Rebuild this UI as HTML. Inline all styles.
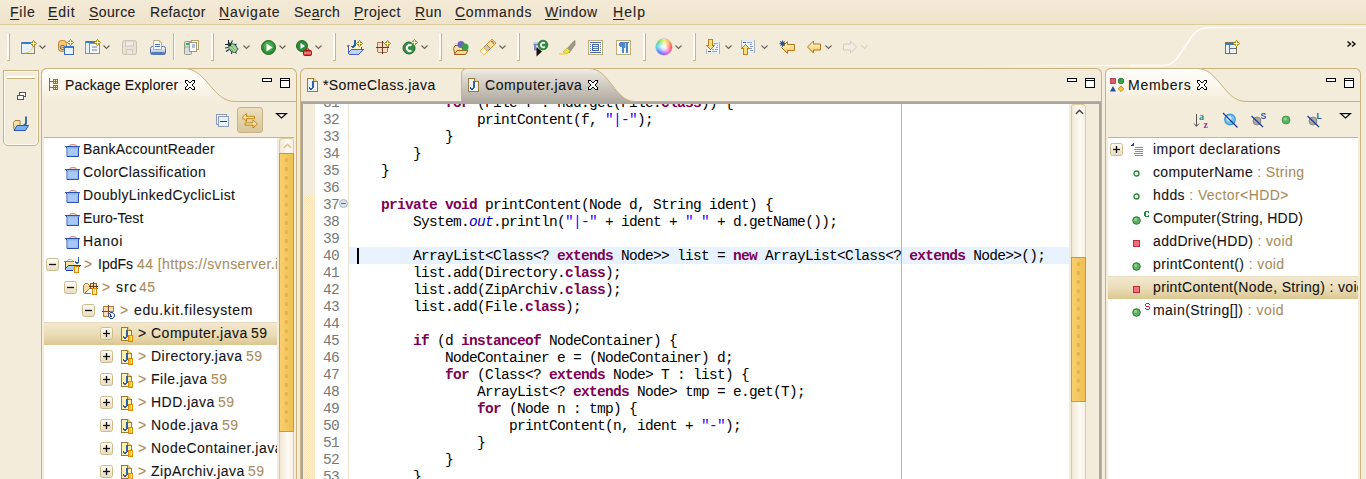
<!DOCTYPE html><html><head><meta charset="utf-8"><style>
*{margin:0;padding:0;box-sizing:border-box}
html,body{width:1366px;height:479px;overflow:hidden;background:#f4ecda}
body{position:relative;font-family:"Liberation Sans",sans-serif;font-size:14px;color:#1a1a1a}
.ab{position:absolute}
.t{position:absolute;white-space:pre;line-height:23px;height:23px;color:#141414;letter-spacing:0.4px;-webkit-text-stroke:0.1px currentColor}
.m{position:absolute;white-space:pre;top:2px;line-height:20px;font-size:14px;color:#242424;letter-spacing:0.5px;-webkit-text-stroke:0.1px currentColor}
.m u{text-decoration:underline;text-underline-offset:2px;text-decoration-thickness:1px}
.code{position:absolute;white-space:pre;font-family:"Liberation Mono",monospace;font-size:14.5px;letter-spacing:-0.7px;line-height:17px;height:17px;color:#000}
.k{color:#7f0055;font-weight:bold}
.s{color:#2a00ff}
.f{color:#0000c0;font-style:italic}
.ln{position:absolute;font-family:"Liberation Mono",monospace;font-size:14.5px;letter-spacing:-0.7px;line-height:17px;color:#787878;text-align:right;width:40px;left:299px}
.dim{color:#a88d5c}
svg{position:absolute;overflow:visible}
</style></head><body>

<div class="ab" style="left:0;top:0;width:1366px;height:24px;background:linear-gradient(#f3ead7,#efe3ca)"></div>
<div class="ab" style="left:0;top:24px;width:1366px;height:1px;background:#dccb9a"></div>
<div class="m" style="left:10px;letter-spacing:0.77px"><u>F</u>ile</div>
<div class="m" style="left:48px;letter-spacing:0.87px"><u>E</u>dit</div>
<div class="m" style="left:89px;letter-spacing:0.4px"><u>S</u>ource</div>
<div class="m" style="left:150px;letter-spacing:0.34px">Refac<u>t</u>or</div>
<div class="m" style="left:219px;letter-spacing:0.77px"><u>N</u>avigate</div>
<div class="m" style="left:294px;letter-spacing:0.28px">Se<u>a</u>rch</div>
<div class="m" style="left:354px;letter-spacing:0.45px"><u>P</u>roject</div>
<div class="m" style="left:415px;letter-spacing:0.4px"><u>R</u>un</div>
<div class="m" style="left:455px;letter-spacing:0.7px"><u>C</u>ommands</div>
<div class="m" style="left:545px;letter-spacing:0.48px"><u>W</u>indow</div>
<div class="m" style="left:613px;letter-spacing:1.1px"><u>H</u>elp</div>
<div class="ab" style="left:7px;top:33px;width:2px;height:27px;background:#fffdf6"></div>
<div class="ab" style="left:9px;top:33px;width:1px;height:28px;background:#cdb77e"></div>
<div class="ab" style="left:7px;top:60px;width:3px;height:1px;background:#cdb77e"></div>
<div class="ab" style="left:211px;top:33px;width:2px;height:27px;background:#fffdf6"></div>
<div class="ab" style="left:213px;top:33px;width:1px;height:28px;background:#cdb77e"></div>
<div class="ab" style="left:211px;top:60px;width:3px;height:1px;background:#cdb77e"></div>
<div class="ab" style="left:333px;top:33px;width:2px;height:27px;background:#fffdf6"></div>
<div class="ab" style="left:335px;top:33px;width:1px;height:28px;background:#cdb77e"></div>
<div class="ab" style="left:333px;top:60px;width:3px;height:1px;background:#cdb77e"></div>
<div class="ab" style="left:439px;top:33px;width:2px;height:27px;background:#fffdf6"></div>
<div class="ab" style="left:441px;top:33px;width:1px;height:28px;background:#cdb77e"></div>
<div class="ab" style="left:439px;top:60px;width:3px;height:1px;background:#cdb77e"></div>
<div class="ab" style="left:517px;top:33px;width:2px;height:27px;background:#fffdf6"></div>
<div class="ab" style="left:519px;top:33px;width:1px;height:28px;background:#cdb77e"></div>
<div class="ab" style="left:517px;top:60px;width:3px;height:1px;background:#cdb77e"></div>
<div class="ab" style="left:643px;top:33px;width:2px;height:27px;background:#fffdf6"></div>
<div class="ab" style="left:645px;top:33px;width:1px;height:28px;background:#cdb77e"></div>
<div class="ab" style="left:643px;top:60px;width:3px;height:1px;background:#cdb77e"></div>
<div class="ab" style="left:693px;top:33px;width:2px;height:27px;background:#fffdf6"></div>
<div class="ab" style="left:695px;top:33px;width:1px;height:28px;background:#cdb77e"></div>
<div class="ab" style="left:693px;top:60px;width:3px;height:1px;background:#cdb77e"></div>
<div class="ab" style="left:173px;top:33px;width:1px;height:27px;background:#cdb77e"></div>
<div class="ab" style="left:174px;top:33px;width:1px;height:27px;background:#fffdf6"></div>
<svg style="left:39px;top:45px" width="7" height="5"><path d="M0.5 0.5 L3.5 3.5 L6.5 0.5" fill="none" stroke="#66625a" stroke-width="1.1"/></svg>
<svg style="left:103px;top:45px" width="7" height="5"><path d="M0.5 0.5 L3.5 3.5 L6.5 0.5" fill="none" stroke="#66625a" stroke-width="1.1"/></svg>
<svg style="left:243px;top:45px" width="7" height="5"><path d="M0.5 0.5 L3.5 3.5 L6.5 0.5" fill="none" stroke="#66625a" stroke-width="1.1"/></svg>
<svg style="left:279px;top:45px" width="7" height="5"><path d="M0.5 0.5 L3.5 3.5 L6.5 0.5" fill="none" stroke="#66625a" stroke-width="1.1"/></svg>
<svg style="left:315px;top:45px" width="7" height="5"><path d="M0.5 0.5 L3.5 3.5 L6.5 0.5" fill="none" stroke="#66625a" stroke-width="1.1"/></svg>
<svg style="left:421px;top:45px" width="7" height="5"><path d="M0.5 0.5 L3.5 3.5 L6.5 0.5" fill="none" stroke="#66625a" stroke-width="1.1"/></svg>
<svg style="left:499px;top:45px" width="7" height="5"><path d="M0.5 0.5 L3.5 3.5 L6.5 0.5" fill="none" stroke="#66625a" stroke-width="1.1"/></svg>
<svg style="left:675px;top:45px" width="7" height="5"><path d="M0.5 0.5 L3.5 3.5 L6.5 0.5" fill="none" stroke="#66625a" stroke-width="1.1"/></svg>
<svg style="left:725px;top:45px" width="7" height="5"><path d="M0.5 0.5 L3.5 3.5 L6.5 0.5" fill="none" stroke="#66625a" stroke-width="1.1"/></svg>
<svg style="left:761px;top:45px" width="7" height="5"><path d="M0.5 0.5 L3.5 3.5 L6.5 0.5" fill="none" stroke="#66625a" stroke-width="1.1"/></svg>
<svg style="left:825px;top:45px" width="7" height="5"><path d="M0.5 0.5 L3.5 3.5 L6.5 0.5" fill="none" stroke="#66625a" stroke-width="1.1"/></svg>
<svg style="left:861px;top:45px" width="7" height="5"><path d="M0.5 0.5 L3.5 3.5 L6.5 0.5" fill="none" stroke="#d8d0c0" stroke-width="1.1"/></svg>
<svg style="left:21px;top:39px" width="16" height="16"><rect x="0.5" y="3.5" width="13" height="11" fill="#e4f0fa" stroke="#8a8270"/><rect x="1" y="3" width="12" height="2" fill="#3a78c8"/><path d="M4 14 Q11 13 12 7" fill="none" stroke="#f0d060" stroke-width="1"/><g shape-rendering="crispEdges"><rect x="12" y="1" width="1" height="1" fill="#b0901c"/><rect x="11" y="2" width="1" height="1" fill="#b0901c"/><rect x="12" y="2" width="1" height="1" fill="#fff6c8"/><rect x="13" y="2" width="1" height="1" fill="#b0901c"/><rect x="10" y="3" width="1" height="1" fill="#b0901c"/><rect x="11" y="3" width="1" height="1" fill="#b0901c"/><rect x="12" y="3" width="1" height="1" fill="#fff6c8"/><rect x="13" y="3" width="1" height="1" fill="#b0901c"/><rect x="14" y="3" width="1" height="1" fill="#b0901c"/><rect x="9" y="4" width="1" height="1" fill="#b0901c"/><rect x="10" y="4" width="1" height="1" fill="#fff6c8"/><rect x="11" y="4" width="1" height="1" fill="#fff6c8"/><rect x="12" y="4" width="1" height="1" fill="#fff6c8"/><rect x="13" y="4" width="1" height="1" fill="#fff6c8"/><rect x="14" y="4" width="1" height="1" fill="#fff6c8"/><rect x="15" y="4" width="1" height="1" fill="#b0901c"/><rect x="10" y="5" width="1" height="1" fill="#b0901c"/><rect x="11" y="5" width="1" height="1" fill="#b0901c"/><rect x="12" y="5" width="1" height="1" fill="#fff6c8"/><rect x="13" y="5" width="1" height="1" fill="#b0901c"/><rect x="14" y="5" width="1" height="1" fill="#b0901c"/><rect x="11" y="6" width="1" height="1" fill="#b0901c"/><rect x="12" y="6" width="1" height="1" fill="#fff6c8"/><rect x="13" y="6" width="1" height="1" fill="#b0901c"/><rect x="12" y="7" width="1" height="1" fill="#b0901c"/></g></svg>
<svg style="left:58px;top:39px" width="16" height="16"><rect x="0.5" y="1.5" width="8" height="11" rx="3" fill="#f4c870" stroke="#c08030"/><rect x="6.5" y="7.5" width="9" height="8" fill="#e8f2fc" stroke="#3a70b8"/><rect x="6" y="7" width="10" height="2" fill="#3a78c8"/><text x="1.5" y="11" font-size="7" fill="#3a70b8" font-family="Liberation Sans" font-weight="bold">G</text><g shape-rendering="crispEdges"><rect x="12" y="0" width="1" height="1" fill="#b0901c"/><rect x="11" y="1" width="1" height="1" fill="#b0901c"/><rect x="12" y="1" width="1" height="1" fill="#fff6c8"/><rect x="13" y="1" width="1" height="1" fill="#b0901c"/><rect x="10" y="2" width="1" height="1" fill="#b0901c"/><rect x="11" y="2" width="1" height="1" fill="#b0901c"/><rect x="12" y="2" width="1" height="1" fill="#fff6c8"/><rect x="13" y="2" width="1" height="1" fill="#b0901c"/><rect x="14" y="2" width="1" height="1" fill="#b0901c"/><rect x="9" y="3" width="1" height="1" fill="#b0901c"/><rect x="10" y="3" width="1" height="1" fill="#fff6c8"/><rect x="11" y="3" width="1" height="1" fill="#fff6c8"/><rect x="12" y="3" width="1" height="1" fill="#fff6c8"/><rect x="13" y="3" width="1" height="1" fill="#fff6c8"/><rect x="14" y="3" width="1" height="1" fill="#fff6c8"/><rect x="15" y="3" width="1" height="1" fill="#b0901c"/><rect x="10" y="4" width="1" height="1" fill="#b0901c"/><rect x="11" y="4" width="1" height="1" fill="#b0901c"/><rect x="12" y="4" width="1" height="1" fill="#fff6c8"/><rect x="13" y="4" width="1" height="1" fill="#b0901c"/><rect x="14" y="4" width="1" height="1" fill="#b0901c"/><rect x="11" y="5" width="1" height="1" fill="#b0901c"/><rect x="12" y="5" width="1" height="1" fill="#fff6c8"/><rect x="13" y="5" width="1" height="1" fill="#b0901c"/><rect x="12" y="6" width="1" height="1" fill="#b0901c"/></g></svg>
<svg style="left:85px;top:39px" width="16" height="16"><rect x="0.5" y="2.5" width="14" height="12" fill="#e4f0fa" stroke="#8090b0"/><rect x="1" y="2" width="13" height="2" fill="#3a78c8"/><rect x="4.5" y="4.5" width="10" height="10" fill="#f4f8fc" stroke="#8090b0"/><path d="M7 8H12M7 11H12" stroke="#7080a0"/><g shape-rendering="crispEdges"><rect x="12" y="0" width="1" height="1" fill="#b0901c"/><rect x="11" y="1" width="1" height="1" fill="#b0901c"/><rect x="12" y="1" width="1" height="1" fill="#fff6c8"/><rect x="13" y="1" width="1" height="1" fill="#b0901c"/><rect x="10" y="2" width="1" height="1" fill="#b0901c"/><rect x="11" y="2" width="1" height="1" fill="#b0901c"/><rect x="12" y="2" width="1" height="1" fill="#fff6c8"/><rect x="13" y="2" width="1" height="1" fill="#b0901c"/><rect x="14" y="2" width="1" height="1" fill="#b0901c"/><rect x="9" y="3" width="1" height="1" fill="#b0901c"/><rect x="10" y="3" width="1" height="1" fill="#fff6c8"/><rect x="11" y="3" width="1" height="1" fill="#fff6c8"/><rect x="12" y="3" width="1" height="1" fill="#fff6c8"/><rect x="13" y="3" width="1" height="1" fill="#fff6c8"/><rect x="14" y="3" width="1" height="1" fill="#fff6c8"/><rect x="15" y="3" width="1" height="1" fill="#b0901c"/><rect x="10" y="4" width="1" height="1" fill="#b0901c"/><rect x="11" y="4" width="1" height="1" fill="#b0901c"/><rect x="12" y="4" width="1" height="1" fill="#fff6c8"/><rect x="13" y="4" width="1" height="1" fill="#b0901c"/><rect x="14" y="4" width="1" height="1" fill="#b0901c"/><rect x="11" y="5" width="1" height="1" fill="#b0901c"/><rect x="12" y="5" width="1" height="1" fill="#fff6c8"/><rect x="13" y="5" width="1" height="1" fill="#b0901c"/><rect x="12" y="6" width="1" height="1" fill="#b0901c"/></g></svg>
<svg style="left:122px;top:40px" width="16" height="16"><rect x="0.5" y="0.5" width="14" height="14" rx="2" fill="#e8e2d6" stroke="#c8c0b0"/><rect x="3.5" y="1" width="8" height="5" fill="#f0ece4" stroke="#d0c8b8"/><rect x="4.5" y="9.5" width="6" height="5" fill="#ece6da" stroke="#d0c8b8"/></svg>
<svg style="left:150px;top:40px" width="16" height="16"><defs><linearGradient id="prg" x1="0" y1="0" x2="0" y2="1"><stop offset="0" stop-color="#ffffff"/><stop offset="1" stop-color="#9ab0d8"/></linearGradient></defs><rect x="0.5" y="6.5" width="15" height="8" rx="2" fill="url(#prg)" stroke="#4a6aa8"/><rect x="1" y="12" width="14" height="2.5" rx="1" fill="#5a7ab8"/><path d="M3.5 9.5V0.5H9.5L11.5 2.5V9.5Z" fill="#f8f8f4" stroke="#b8a878" stroke-width="0.9"/><path d="M9.5 0.5V2.5H11.5" fill="#e8d8a8" stroke="#b8a878" stroke-width="0.7"/><path d="M5 4.5H10M5 6.5H10" stroke="#4a6aa8" stroke-width="1"/></svg>
<svg style="left:184px;top:40px" width="16" height="16"><rect x="0.5" y="1.5" width="7" height="13" rx="1" fill="#d8dcea" stroke="#9a9a80"/><rect x="2" y="3" width="3" height="2" fill="#30b040"/><path d="M1 7H7" stroke="#a0a0b0"/><rect x="7.5" y="0.5" width="7" height="9" fill="#fff" stroke="#b8a060"/><rect x="5.5" y="2.5" width="7" height="9" fill="#fff" stroke="#a09880"/><path d="M8 5H11M8 7H11" stroke="#6080b0"/></svg>
<svg style="left:224px;top:39px" width="16" height="16"><path d="M4.5 1V4M1 5.5H4M1 9L4.5 8.5M2 12.5L5 10.5M8.5 1.5L7 4.5M12.5 5L10 6.5M14.5 10H11.5M12.5 14.5L10.5 12M7.5 15L8 12" stroke="#1a3030" stroke-width="1.1"/><ellipse cx="9" cy="9" rx="3.6" ry="4.8" transform="rotate(-45 9 9)" fill="#a8d08c" stroke="#2a6870" stroke-width="1"/><path d="M7 7L11 11M6.5 9.5L9.5 12.5" stroke="#78a868" stroke-width="0.8"/><circle cx="5.5" cy="5.5" r="2" fill="#203838"/></svg>
<svg style="left:261px;top:40px" width="16" height="16"><circle cx="7.5" cy="7.5" r="7" fill="#2f8c38" stroke="#1e6a28"/><circle cx="7.5" cy="6.5" r="5" fill="#4aaa4c"/><path d="M5.5 3.5L11.5 7.5L5.5 11.5Z" fill="#fff"/></svg>
<svg style="left:296px;top:40px" width="16" height="16"><circle cx="6" cy="6" r="5.5" fill="#2f8c38" stroke="#1e6a28"/><path d="M4.5 3L9 6L4.5 9Z" fill="#fff"/><rect x="7.5" y="10.5" width="8" height="5" rx="1" fill="#d83838" stroke="#a01818"/><path d="M10 10.5V9H13V10.5" fill="none" stroke="#a01818"/><path d="M8 13H15" stroke="#fff" stroke-width="0.7"/></svg>
<svg style="left:402px;top:39px" width="16" height="16"><circle cx="7" cy="9" r="6" fill="#2f9040" stroke="#1e6a28"/><path d="M9.5 6.5A3 3 0 1 0 9.5 11.5" fill="none" stroke="#fff" stroke-width="2"/><g shape-rendering="crispEdges"><rect x="12" y="0" width="1" height="1" fill="#b0901c"/><rect x="11" y="1" width="1" height="1" fill="#b0901c"/><rect x="12" y="1" width="1" height="1" fill="#fff6c8"/><rect x="13" y="1" width="1" height="1" fill="#b0901c"/><rect x="10" y="2" width="1" height="1" fill="#b0901c"/><rect x="11" y="2" width="1" height="1" fill="#b0901c"/><rect x="12" y="2" width="1" height="1" fill="#fff6c8"/><rect x="13" y="2" width="1" height="1" fill="#b0901c"/><rect x="14" y="2" width="1" height="1" fill="#b0901c"/><rect x="9" y="3" width="1" height="1" fill="#b0901c"/><rect x="10" y="3" width="1" height="1" fill="#fff6c8"/><rect x="11" y="3" width="1" height="1" fill="#fff6c8"/><rect x="12" y="3" width="1" height="1" fill="#fff6c8"/><rect x="13" y="3" width="1" height="1" fill="#fff6c8"/><rect x="14" y="3" width="1" height="1" fill="#fff6c8"/><rect x="15" y="3" width="1" height="1" fill="#b0901c"/><rect x="10" y="4" width="1" height="1" fill="#b0901c"/><rect x="11" y="4" width="1" height="1" fill="#b0901c"/><rect x="12" y="4" width="1" height="1" fill="#fff6c8"/><rect x="13" y="4" width="1" height="1" fill="#b0901c"/><rect x="14" y="4" width="1" height="1" fill="#b0901c"/><rect x="11" y="5" width="1" height="1" fill="#b0901c"/><rect x="12" y="5" width="1" height="1" fill="#fff6c8"/><rect x="13" y="5" width="1" height="1" fill="#b0901c"/><rect x="12" y="6" width="1" height="1" fill="#b0901c"/></g></svg>
<svg style="left:453px;top:40px" width="16" height="16"><path d="M0.5 8.5L2 5.5H10V14.5H2Z" fill="#f8e0a0" stroke="#a06020"/><path d="M1.5 14.5L4 10.5H15L12.5 14.5Z" fill="#f8d890" stroke="#a06020"/><circle cx="8" cy="4.5" r="3.5" fill="#7060c0"/><circle cx="12" cy="7" r="3.5" fill="#38a048"/></svg>
<svg style="left:479px;top:38px" width="16" height="16"><path d="M7.5 6.5L13 1L17 5L11.5 10.5Z" fill="#f8e0a0" stroke="#e09020" stroke-width="1"/><path d="M4.5 9.5L7.5 6.5L11.5 10.5L8.5 13.5Z" fill="#c8c4cc" stroke="#9a8050" stroke-width="0.8"/><path d="M1 13L4.5 9.5L8.5 13.5L5 17Z" fill="#fff8d0" stroke="#f0b030" stroke-width="0.8"/><circle cx="13" cy="3.6" r="0.8" fill="#2a50a0"/><circle cx="14.4" cy="5" r="0.8" fill="#2a50a0"/></svg>
<svg style="left:532px;top:40px" width="16" height="16"><path d="M1.5 4.5H8M3 4.5V9.5H6" fill="none" stroke="#7a88c8" stroke-width="2"/><rect x="2" y="2" width="4" height="2" fill="#b8c4e8"/><circle cx="11" cy="5" r="4.8" fill="#2a9040" stroke="#1e6a28" stroke-width="0.8"/><path d="M12.8 3.3A2.3 2.3 0 1 0 12.8 6.7" fill="none" stroke="#fff" stroke-width="1.6"/><path d="M4.5 7L4.5 16.5L10 11.5Z" fill="#111"/></svg>
<svg style="left:559px;top:40px" width="16" height="16"><path d="M7 10L14 2L16 0.5V5L10 13Z" fill="#a09a88" stroke="#807860" stroke-width="0.6"/><path d="M4 12L8 8L11 11L8 14Z" fill="#f0e040" stroke="#c0b020" stroke-width="0.6"/><path d="M0 14H6" stroke="#f0d030" stroke-width="1.2"/></svg>
<svg style="left:779px;top:40px" width="16" height="16"><defs><linearGradient id="arg1" x1="0" y1="0" x2="0" y2="1"><stop offset="0" stop-color="#fffcec"/><stop offset="1" stop-color="#f2c448"/></linearGradient></defs><path d="M2.5 7.5L8.5 1.5V4.5H15.5V10.5H8.5V13.5Z" fill="url(#arg1)" stroke="#b87818" stroke-linejoin="miter"/><path d="M3.5 0.5V6.5M0.5 3.5H6.5M1.3 1.3L5.7 5.7M5.7 1.3L1.3 5.7" stroke="#2a50a0" stroke-width="1.1"/></svg>
<svg style="left:807px;top:40px" width="16" height="16"><defs><linearGradient id="arg2" x1="0" y1="0" x2="0" y2="1"><stop offset="0" stop-color="#fffcec"/><stop offset="1" stop-color="#f2c448"/></linearGradient></defs><path d="M0.5 7L6.5 1V4H13.5V10H6.5V13Z" fill="url(#arg2)" stroke="#b87818" stroke-linejoin="miter"/></svg>
<svg style="left:843px;top:40px" width="16" height="16"><path d="M13.5 7L7.5 1V4H0.5V10H7.5V13Z" fill="#f2eee4" stroke="#d4ccbc" stroke-linejoin="miter"/></svg>
<div class="ab" style="left:656px;top:39px;width:16px;height:16px;border-radius:50%;background:radial-gradient(circle,#fff 0,rgba(255,255,255,0.85) 20%,rgba(255,255,255,0) 75%),conic-gradient(from 90deg,#ff3030,#ff40c0,#8040ff,#3060ff,#30d0ff,#40e060,#f0f040,#ffa030,#ff3030);box-shadow:0 0 0 0.5px rgba(120,80,160,0.5)"></div>
<svg style="left:706px;top:39px" width="15" height="15" shape-rendering="crispEdges"><rect x="2" y="0" width="5" height="1" fill="#c08018"/><rect x="2" y="1" width="1" height="1" fill="#c08018"/><rect x="3" y="1" width="3" height="1" fill="#f8dc80"/><rect x="6" y="1" width="1" height="1" fill="#c08018"/><rect x="2" y="2" width="1" height="1" fill="#c08018"/><rect x="3" y="2" width="3" height="1" fill="#f8dc80"/><rect x="6" y="2" width="1" height="1" fill="#c08018"/><rect x="2" y="3" width="1" height="1" fill="#c08018"/><rect x="3" y="3" width="3" height="1" fill="#f8dc80"/><rect x="6" y="3" width="1" height="1" fill="#c08018"/><rect x="7" y="3" width="6" height="1" fill="#f0f6fd"/><rect x="13" y="3" width="1" height="1" fill="#a8b4c8"/><rect x="2" y="4" width="1" height="1" fill="#c08018"/><rect x="3" y="4" width="3" height="1" fill="#f8dc80"/><rect x="6" y="4" width="1" height="1" fill="#c08018"/><rect x="7" y="4" width="1" height="1" fill="#f0f6fd"/><rect x="8" y="4" width="4" height="1" fill="#8aa0c8"/><rect x="12" y="4" width="1" height="1" fill="#f0f6fd"/><rect x="13" y="4" width="1" height="1" fill="#a8b4c8"/><rect x="2" y="5" width="1" height="1" fill="#c08018"/><rect x="3" y="5" width="3" height="1" fill="#f8dc80"/><rect x="6" y="5" width="1" height="1" fill="#c08018"/><rect x="7" y="5" width="6" height="1" fill="#f0f6fd"/><rect x="13" y="5" width="1" height="1" fill="#a8b4c8"/><rect x="0" y="6" width="3" height="1" fill="#c08018"/><rect x="3" y="6" width="3" height="1" fill="#f8dc80"/><rect x="6" y="6" width="3" height="1" fill="#c08018"/><rect x="9" y="6" width="2" height="1" fill="#f0f6fd"/><rect x="11" y="6" width="1" height="1" fill="#8aa0c8"/><rect x="12" y="6" width="1" height="1" fill="#f0f6fd"/><rect x="13" y="6" width="1" height="1" fill="#a8b4c8"/><rect x="1" y="7" width="1" height="1" fill="#c08018"/><rect x="2" y="7" width="5" height="1" fill="#f8dc80"/><rect x="7" y="7" width="1" height="1" fill="#c08018"/><rect x="8" y="7" width="5" height="1" fill="#f0f6fd"/><rect x="13" y="7" width="1" height="1" fill="#a8b4c8"/><rect x="2" y="8" width="1" height="1" fill="#c08018"/><rect x="3" y="8" width="3" height="1" fill="#f8dc80"/><rect x="6" y="8" width="1" height="1" fill="#c08018"/><rect x="8" y="8" width="2" height="1" fill="#f0f6fd"/><rect x="10" y="8" width="2" height="1" fill="#8aa0c8"/><rect x="12" y="8" width="1" height="1" fill="#f0f6fd"/><rect x="13" y="8" width="1" height="1" fill="#a8b4c8"/><rect x="3" y="9" width="1" height="1" fill="#c08018"/><rect x="4" y="9" width="1" height="1" fill="#f8dc80"/><rect x="5" y="9" width="1" height="1" fill="#c08018"/><rect x="8" y="9" width="5" height="1" fill="#f0f6fd"/><rect x="13" y="9" width="1" height="1" fill="#a8b4c8"/><rect x="0" y="10" width="1" height="1" fill="#a8b4c8"/><rect x="4" y="10" width="1" height="1" fill="#c08018"/><rect x="6" y="10" width="2" height="1" fill="#8aa0c8"/><rect x="8" y="10" width="1" height="1" fill="#f0f6fd"/><rect x="9" y="10" width="3" height="1" fill="#8aa0c8"/><rect x="12" y="10" width="1" height="1" fill="#f0f6fd"/><rect x="13" y="10" width="1" height="1" fill="#a8b4c8"/><rect x="0" y="11" width="1" height="1" fill="#a8b4c8"/><rect x="1" y="11" width="12" height="1" fill="#f0f6fd"/><rect x="13" y="11" width="1" height="1" fill="#a8b4c8"/><rect x="0" y="12" width="1" height="1" fill="#a8b4c8"/><rect x="1" y="12" width="1" height="1" fill="#f0f6fd"/><rect x="2" y="12" width="3" height="1" fill="#2a5aa0"/><rect x="5" y="12" width="1" height="1" fill="#f0f6fd"/><rect x="6" y="12" width="5" height="1" fill="#8aa0c8"/><rect x="11" y="12" width="2" height="1" fill="#f0f6fd"/><rect x="13" y="12" width="1" height="1" fill="#a8b4c8"/><rect x="0" y="13" width="1" height="1" fill="#a8b4c8"/><rect x="1" y="13" width="12" height="1" fill="#f0f6fd"/><rect x="13" y="13" width="1" height="1" fill="#a8b4c8"/><rect x="0" y="14" width="1" height="1" fill="#a8b4c8"/><rect x="1" y="14" width="12" height="1" fill="#dce6f4"/><rect x="13" y="14" width="1" height="1" fill="#a8b4c8"/></svg>
<svg style="left:741px;top:40px" width="15" height="15" shape-rendering="crispEdges"><rect x="0" y="0" width="1" height="1" fill="#a8b4c8"/><rect x="1" y="0" width="12" height="1" fill="#dce6f4"/><rect x="13" y="0" width="1" height="1" fill="#a8b4c8"/><rect x="0" y="1" width="1" height="1" fill="#a8b4c8"/><rect x="1" y="1" width="12" height="1" fill="#f0f6fd"/><rect x="13" y="1" width="1" height="1" fill="#a8b4c8"/><rect x="0" y="2" width="1" height="1" fill="#a8b4c8"/><rect x="1" y="2" width="1" height="1" fill="#f0f6fd"/><rect x="2" y="2" width="3" height="1" fill="#2a5aa0"/><rect x="5" y="2" width="1" height="1" fill="#f0f6fd"/><rect x="6" y="2" width="5" height="1" fill="#8aa0c8"/><rect x="11" y="2" width="2" height="1" fill="#f0f6fd"/><rect x="13" y="2" width="1" height="1" fill="#a8b4c8"/><rect x="0" y="3" width="1" height="1" fill="#a8b4c8"/><rect x="1" y="3" width="12" height="1" fill="#f0f6fd"/><rect x="13" y="3" width="1" height="1" fill="#a8b4c8"/><rect x="0" y="4" width="1" height="1" fill="#a8b4c8"/><rect x="1" y="4" width="3" height="1" fill="#f0f6fd"/><rect x="4" y="4" width="1" height="1" fill="#c08018"/><rect x="5" y="4" width="4" height="1" fill="#f0f6fd"/><rect x="9" y="4" width="2" height="1" fill="#8aa0c8"/><rect x="11" y="4" width="2" height="1" fill="#f0f6fd"/><rect x="13" y="4" width="1" height="1" fill="#a8b4c8"/><rect x="0" y="5" width="1" height="1" fill="#a8b4c8"/><rect x="1" y="5" width="2" height="1" fill="#f0f6fd"/><rect x="3" y="5" width="1" height="1" fill="#c08018"/><rect x="4" y="5" width="1" height="1" fill="#f8dc80"/><rect x="5" y="5" width="1" height="1" fill="#c08018"/><rect x="6" y="5" width="7" height="1" fill="#f0f6fd"/><rect x="13" y="5" width="1" height="1" fill="#a8b4c8"/><rect x="0" y="6" width="1" height="1" fill="#a8b4c8"/><rect x="1" y="6" width="1" height="1" fill="#f0f6fd"/><rect x="2" y="6" width="1" height="1" fill="#c08018"/><rect x="3" y="6" width="3" height="1" fill="#f8dc80"/><rect x="6" y="6" width="1" height="1" fill="#c08018"/><rect x="7" y="6" width="2" height="1" fill="#f0f6fd"/><rect x="9" y="6" width="3" height="1" fill="#8aa0c8"/><rect x="12" y="6" width="1" height="1" fill="#f0f6fd"/><rect x="13" y="6" width="1" height="1" fill="#a8b4c8"/><rect x="0" y="7" width="1" height="1" fill="#a8b4c8"/><rect x="1" y="7" width="1" height="1" fill="#c08018"/><rect x="2" y="7" width="5" height="1" fill="#f8dc80"/><rect x="7" y="7" width="1" height="1" fill="#c08018"/><rect x="8" y="7" width="5" height="1" fill="#f0f6fd"/><rect x="13" y="7" width="1" height="1" fill="#a8b4c8"/><rect x="0" y="8" width="3" height="1" fill="#c08018"/><rect x="3" y="8" width="3" height="1" fill="#f8dc80"/><rect x="6" y="8" width="3" height="1" fill="#c08018"/><rect x="9" y="8" width="2" height="1" fill="#8aa0c8"/><rect x="11" y="8" width="2" height="1" fill="#f0f6fd"/><rect x="13" y="8" width="1" height="1" fill="#a8b4c8"/><rect x="2" y="9" width="1" height="1" fill="#c08018"/><rect x="3" y="9" width="3" height="1" fill="#f8dc80"/><rect x="6" y="9" width="1" height="1" fill="#c08018"/><rect x="8" y="9" width="5" height="1" fill="#f0f6fd"/><rect x="13" y="9" width="1" height="1" fill="#a8b4c8"/><rect x="2" y="10" width="1" height="1" fill="#c08018"/><rect x="3" y="10" width="3" height="1" fill="#f8dc80"/><rect x="6" y="10" width="1" height="1" fill="#c08018"/><rect x="7" y="10" width="2" height="1" fill="#f0f6fd"/><rect x="9" y="10" width="3" height="1" fill="#8aa0c8"/><rect x="12" y="10" width="1" height="1" fill="#f0f6fd"/><rect x="13" y="10" width="1" height="1" fill="#a8b4c8"/><rect x="2" y="11" width="1" height="1" fill="#c08018"/><rect x="3" y="11" width="3" height="1" fill="#f8dc80"/><rect x="6" y="11" width="1" height="1" fill="#c08018"/><rect x="7" y="11" width="6" height="1" fill="#f0f6fd"/><rect x="13" y="11" width="1" height="1" fill="#a8b4c8"/><rect x="2" y="12" width="1" height="1" fill="#c08018"/><rect x="3" y="12" width="3" height="1" fill="#f8dc80"/><rect x="6" y="12" width="1" height="1" fill="#c08018"/><rect x="7" y="12" width="6" height="1" fill="#dce6f4"/><rect x="13" y="12" width="1" height="1" fill="#a8b4c8"/><rect x="2" y="13" width="1" height="1" fill="#c08018"/><rect x="3" y="13" width="3" height="1" fill="#f8dc80"/><rect x="6" y="13" width="1" height="1" fill="#c08018"/><rect x="2" y="14" width="5" height="1" fill="#c08018"/></svg>
<svg style="left:347px;top:40px" width="17" height="15" shape-rendering="crispEdges"><rect x="7" y="0" width="2" height="1" fill="#2a62a8"/><rect x="12" y="0" width="1" height="1" fill="#a88a1c"/><rect x="7" y="1" width="2" height="1" fill="#2a62a8"/><rect x="11" y="1" width="1" height="1" fill="#a88a1c"/><rect x="12" y="1" width="1" height="1" fill="#fff4c0"/><rect x="13" y="1" width="1" height="1" fill="#a88a1c"/><rect x="7" y="2" width="2" height="1" fill="#2a62a8"/><rect x="10" y="2" width="2" height="1" fill="#a88a1c"/><rect x="12" y="2" width="1" height="1" fill="#fff4c0"/><rect x="13" y="2" width="2" height="1" fill="#a88a1c"/><rect x="7" y="3" width="2" height="1" fill="#2a62a8"/><rect x="9" y="3" width="1" height="1" fill="#a88a1c"/><rect x="10" y="3" width="5" height="1" fill="#fff4c0"/><rect x="15" y="3" width="1" height="1" fill="#a88a1c"/><rect x="3" y="4" width="1" height="1" fill="#fff0c0"/><rect x="7" y="4" width="2" height="1" fill="#2a62a8"/><rect x="10" y="4" width="2" height="1" fill="#a88a1c"/><rect x="12" y="4" width="1" height="1" fill="#fff4c0"/><rect x="13" y="4" width="2" height="1" fill="#a88a1c"/><rect x="0" y="5" width="3" height="1" fill="#8a80a8"/><rect x="3" y="5" width="1" height="1" fill="#fff0c0"/><rect x="6" y="5" width="3" height="1" fill="#2a62a8"/><rect x="11" y="5" width="1" height="1" fill="#a88a1c"/><rect x="12" y="5" width="1" height="1" fill="#fff4c0"/><rect x="13" y="5" width="1" height="1" fill="#a88a1c"/><rect x="0" y="6" width="1" height="1" fill="#8a80a8"/><rect x="1" y="6" width="1" height="1" fill="#4a58c0"/><rect x="2" y="6" width="2" height="1" fill="#fff0c0"/><rect x="4" y="6" width="4" height="1" fill="#2a62a8"/><rect x="8" y="6" width="4" height="1" fill="#fff0c0"/><rect x="12" y="6" width="1" height="1" fill="#a88a1c"/><rect x="13" y="6" width="2" height="1" fill="#fff0c0"/><rect x="1" y="7" width="1" height="1" fill="#4a58c0"/><rect x="2" y="7" width="3" height="1" fill="#fff0c0"/><rect x="5" y="7" width="2" height="1" fill="#2a62a8"/><rect x="7" y="7" width="7" height="1" fill="#fff0c0"/><rect x="14" y="7" width="1" height="1" fill="#4a58c0"/><rect x="1" y="8" width="1" height="1" fill="#4a58c0"/><rect x="2" y="8" width="12" height="1" fill="#fff0c0"/><rect x="14" y="8" width="1" height="1" fill="#4a58c0"/><rect x="1" y="9" width="1" height="1" fill="#4a58c0"/><rect x="2" y="9" width="2" height="1" fill="#fff0c0"/><rect x="4" y="9" width="13" height="1" fill="#4a60c8"/><rect x="1" y="10" width="1" height="1" fill="#4a58c0"/><rect x="2" y="10" width="1" height="1" fill="#fff0c0"/><rect x="3" y="10" width="1" height="1" fill="#4a60c8"/><rect x="4" y="10" width="11" height="1" fill="#b8d8f8"/><rect x="15" y="10" width="1" height="1" fill="#4a60c8"/><rect x="1" y="11" width="1" height="1" fill="#4a58c0"/><rect x="2" y="11" width="1" height="1" fill="#4a60c8"/><rect x="3" y="11" width="11" height="1" fill="#b8d8f8"/><rect x="14" y="11" width="1" height="1" fill="#4a60c8"/><rect x="1" y="12" width="1" height="1" fill="#4a58c0"/><rect x="2" y="12" width="11" height="1" fill="#b8d8f8"/><rect x="13" y="12" width="1" height="1" fill="#4a60c8"/><rect x="1" y="13" width="1" height="1" fill="#4a58c0"/><rect x="2" y="13" width="10" height="1" fill="#b8d8f8"/><rect x="12" y="13" width="1" height="1" fill="#4a60c8"/><rect x="2" y="14" width="10" height="1" fill="#4a60c8"/></svg>
<svg style="left:376px;top:40px" width="16" height="14" shape-rendering="crispEdges"><rect x="11" y="0" width="1" height="1" fill="#a88a1c"/><rect x="6" y="1" width="1" height="1" fill="#6a3a28"/><rect x="10" y="1" width="1" height="1" fill="#a88a1c"/><rect x="11" y="1" width="1" height="1" fill="#fff4c0"/><rect x="12" y="1" width="1" height="1" fill="#a88a1c"/><rect x="1" y="2" width="5" height="1" fill="#b87858"/><rect x="6" y="2" width="1" height="1" fill="#6a3a28"/><rect x="7" y="2" width="1" height="1" fill="#b87858"/><rect x="9" y="2" width="2" height="1" fill="#a88a1c"/><rect x="11" y="2" width="1" height="1" fill="#fff4c0"/><rect x="12" y="2" width="2" height="1" fill="#a88a1c"/><rect x="1" y="3" width="1" height="1" fill="#b87858"/><rect x="2" y="3" width="4" height="1" fill="#f4dcc0"/><rect x="6" y="3" width="1" height="1" fill="#6a3a28"/><rect x="7" y="3" width="1" height="1" fill="#f4dcc0"/><rect x="8" y="3" width="1" height="1" fill="#a88a1c"/><rect x="9" y="3" width="5" height="1" fill="#fff4c0"/><rect x="14" y="3" width="1" height="1" fill="#a88a1c"/><rect x="1" y="4" width="1" height="1" fill="#b87858"/><rect x="2" y="4" width="4" height="1" fill="#f4dcc0"/><rect x="6" y="4" width="1" height="1" fill="#6a3a28"/><rect x="7" y="4" width="2" height="1" fill="#f4dcc0"/><rect x="9" y="4" width="2" height="1" fill="#a88a1c"/><rect x="11" y="4" width="1" height="1" fill="#fff4c0"/><rect x="12" y="4" width="2" height="1" fill="#a88a1c"/><rect x="1" y="5" width="1" height="1" fill="#b87858"/><rect x="2" y="5" width="4" height="1" fill="#f4dcc0"/><rect x="6" y="5" width="1" height="1" fill="#6a3a28"/><rect x="7" y="5" width="3" height="1" fill="#f4dcc0"/><rect x="10" y="5" width="1" height="1" fill="#a88a1c"/><rect x="11" y="5" width="1" height="1" fill="#fff4c0"/><rect x="12" y="5" width="1" height="1" fill="#a88a1c"/><rect x="1" y="6" width="1" height="1" fill="#b87858"/><rect x="2" y="6" width="4" height="1" fill="#f4dcc0"/><rect x="6" y="6" width="1" height="1" fill="#6a3a28"/><rect x="7" y="6" width="4" height="1" fill="#f4dcc0"/><rect x="11" y="6" width="1" height="1" fill="#a88a1c"/><rect x="12" y="6" width="1" height="1" fill="#b87858"/><rect x="0" y="7" width="13" height="1" fill="#6a3a28"/><rect x="1" y="8" width="1" height="1" fill="#b87858"/><rect x="2" y="8" width="4" height="1" fill="#f4dcc0"/><rect x="6" y="8" width="1" height="1" fill="#6a3a28"/><rect x="7" y="8" width="4" height="1" fill="#f4dcc0"/><rect x="11" y="8" width="1" height="1" fill="#b87858"/><rect x="1" y="9" width="1" height="1" fill="#b87858"/><rect x="2" y="9" width="4" height="1" fill="#f4dcc0"/><rect x="6" y="9" width="1" height="1" fill="#6a3a28"/><rect x="7" y="9" width="4" height="1" fill="#f4dcc0"/><rect x="11" y="9" width="1" height="1" fill="#b87858"/><rect x="1" y="10" width="1" height="1" fill="#b87858"/><rect x="2" y="10" width="4" height="1" fill="#f4dcc0"/><rect x="6" y="10" width="1" height="1" fill="#6a3a28"/><rect x="7" y="10" width="4" height="1" fill="#f4dcc0"/><rect x="11" y="10" width="1" height="1" fill="#b87858"/><rect x="1" y="11" width="1" height="1" fill="#b87858"/><rect x="2" y="11" width="4" height="1" fill="#f4dcc0"/><rect x="6" y="11" width="1" height="1" fill="#6a3a28"/><rect x="7" y="11" width="4" height="1" fill="#f4dcc0"/><rect x="11" y="11" width="1" height="1" fill="#b87858"/><rect x="2" y="12" width="4" height="1" fill="#b87858"/><rect x="6" y="12" width="1" height="1" fill="#6a3a28"/><rect x="7" y="12" width="4" height="1" fill="#b87858"/><rect x="6" y="13" width="1" height="1" fill="#6a3a28"/></svg>
<svg style="left:588px;top:40px" width="15" height="15" shape-rendering="crispEdges"><rect x="0" y="0" width="15" height="1" fill="#bcac7c"/><rect x="0" y="1" width="1" height="1" fill="#bcac7c"/><rect x="1" y="1" width="13" height="1" fill="#f4f8fe"/><rect x="14" y="1" width="1" height="1" fill="#bcac7c"/><rect x="0" y="2" width="1" height="1" fill="#bcac7c"/><rect x="1" y="2" width="1" height="1" fill="#f4f8fe"/><rect x="2" y="2" width="11" height="1" fill="#4a6aa8"/><rect x="13" y="2" width="1" height="1" fill="#f4f8fe"/><rect x="14" y="2" width="1" height="1" fill="#bcac7c"/><rect x="0" y="3" width="1" height="1" fill="#bcac7c"/><rect x="1" y="3" width="13" height="1" fill="#f4f8fe"/><rect x="14" y="3" width="1" height="1" fill="#bcac7c"/><rect x="0" y="4" width="1" height="1" fill="#bcac7c"/><rect x="1" y="4" width="1" height="1" fill="#f4f8fe"/><rect x="2" y="4" width="1" height="1" fill="#6a88c0"/><rect x="3" y="4" width="1" height="1" fill="#f4f8fe"/><rect x="4" y="4" width="7" height="1" fill="#4a6aa8"/><rect x="11" y="4" width="1" height="1" fill="#f4f8fe"/><rect x="12" y="4" width="1" height="1" fill="#6a88c0"/><rect x="13" y="4" width="1" height="1" fill="#f4f8fe"/><rect x="14" y="4" width="1" height="1" fill="#bcac7c"/><rect x="0" y="5" width="1" height="1" fill="#bcac7c"/><rect x="1" y="5" width="3" height="1" fill="#f4f8fe"/><rect x="4" y="5" width="1" height="1" fill="#4a6aa8"/><rect x="5" y="5" width="5" height="1" fill="#e4ecf8"/><rect x="10" y="5" width="1" height="1" fill="#4a6aa8"/><rect x="11" y="5" width="3" height="1" fill="#f4f8fe"/><rect x="14" y="5" width="1" height="1" fill="#bcac7c"/><rect x="0" y="6" width="1" height="1" fill="#bcac7c"/><rect x="1" y="6" width="1" height="1" fill="#f4f8fe"/><rect x="2" y="6" width="1" height="1" fill="#6a88c0"/><rect x="3" y="6" width="1" height="1" fill="#f4f8fe"/><rect x="4" y="6" width="1" height="1" fill="#4a6aa8"/><rect x="5" y="6" width="5" height="1" fill="#5a7ab8"/><rect x="10" y="6" width="1" height="1" fill="#4a6aa8"/><rect x="11" y="6" width="1" height="1" fill="#f4f8fe"/><rect x="12" y="6" width="1" height="1" fill="#6a88c0"/><rect x="13" y="6" width="1" height="1" fill="#f4f8fe"/><rect x="14" y="6" width="1" height="1" fill="#bcac7c"/><rect x="0" y="7" width="1" height="1" fill="#bcac7c"/><rect x="1" y="7" width="3" height="1" fill="#f4f8fe"/><rect x="4" y="7" width="1" height="1" fill="#4a6aa8"/><rect x="5" y="7" width="5" height="1" fill="#e4ecf8"/><rect x="10" y="7" width="1" height="1" fill="#4a6aa8"/><rect x="11" y="7" width="3" height="1" fill="#f4f8fe"/><rect x="14" y="7" width="1" height="1" fill="#bcac7c"/><rect x="0" y="8" width="1" height="1" fill="#bcac7c"/><rect x="1" y="8" width="1" height="1" fill="#f4f8fe"/><rect x="2" y="8" width="1" height="1" fill="#6a88c0"/><rect x="3" y="8" width="1" height="1" fill="#f4f8fe"/><rect x="4" y="8" width="1" height="1" fill="#4a6aa8"/><rect x="5" y="8" width="5" height="1" fill="#5a7ab8"/><rect x="10" y="8" width="1" height="1" fill="#4a6aa8"/><rect x="11" y="8" width="1" height="1" fill="#f4f8fe"/><rect x="12" y="8" width="1" height="1" fill="#6a88c0"/><rect x="13" y="8" width="1" height="1" fill="#f4f8fe"/><rect x="14" y="8" width="1" height="1" fill="#bcac7c"/><rect x="0" y="9" width="1" height="1" fill="#bcac7c"/><rect x="1" y="9" width="3" height="1" fill="#f4f8fe"/><rect x="4" y="9" width="1" height="1" fill="#4a6aa8"/><rect x="5" y="9" width="5" height="1" fill="#e4ecf8"/><rect x="10" y="9" width="1" height="1" fill="#4a6aa8"/><rect x="11" y="9" width="3" height="1" fill="#f4f8fe"/><rect x="14" y="9" width="1" height="1" fill="#bcac7c"/><rect x="0" y="10" width="1" height="1" fill="#bcac7c"/><rect x="1" y="10" width="1" height="1" fill="#f4f8fe"/><rect x="2" y="10" width="1" height="1" fill="#6a88c0"/><rect x="3" y="10" width="1" height="1" fill="#f4f8fe"/><rect x="4" y="10" width="7" height="1" fill="#4a6aa8"/><rect x="11" y="10" width="1" height="1" fill="#f4f8fe"/><rect x="12" y="10" width="1" height="1" fill="#6a88c0"/><rect x="13" y="10" width="1" height="1" fill="#f4f8fe"/><rect x="14" y="10" width="1" height="1" fill="#bcac7c"/><rect x="0" y="11" width="1" height="1" fill="#bcac7c"/><rect x="1" y="11" width="13" height="1" fill="#f4f8fe"/><rect x="14" y="11" width="1" height="1" fill="#bcac7c"/><rect x="0" y="12" width="1" height="1" fill="#bcac7c"/><rect x="1" y="12" width="1" height="1" fill="#f4f8fe"/><rect x="2" y="12" width="11" height="1" fill="#4a6aa8"/><rect x="13" y="12" width="1" height="1" fill="#f4f8fe"/><rect x="14" y="12" width="1" height="1" fill="#bcac7c"/><rect x="0" y="13" width="1" height="1" fill="#bcac7c"/><rect x="1" y="13" width="13" height="1" fill="#f4f8fe"/><rect x="14" y="13" width="1" height="1" fill="#bcac7c"/><rect x="0" y="14" width="15" height="1" fill="#bcac7c"/></svg>
<svg style="left:616px;top:40px" width="15" height="15" shape-rendering="crispEdges"><rect x="0" y="0" width="15" height="1" fill="#bcac7c"/><rect x="0" y="1" width="1" height="1" fill="#bcac7c"/><rect x="1" y="1" width="13" height="1" fill="#f4f8fe"/><rect x="14" y="1" width="1" height="1" fill="#bcac7c"/><rect x="0" y="2" width="1" height="1" fill="#bcac7c"/><rect x="1" y="2" width="3" height="1" fill="#f4f8fe"/><rect x="4" y="2" width="9" height="1" fill="#5088c4"/><rect x="13" y="2" width="1" height="1" fill="#f4f8fe"/><rect x="14" y="2" width="1" height="1" fill="#bcac7c"/><rect x="0" y="3" width="1" height="1" fill="#bcac7c"/><rect x="1" y="3" width="2" height="1" fill="#f4f8fe"/><rect x="3" y="3" width="6" height="1" fill="#5088c4"/><rect x="9" y="3" width="1" height="1" fill="#b0cce8"/><rect x="10" y="3" width="2" height="1" fill="#5088c4"/><rect x="12" y="3" width="2" height="1" fill="#f4f8fe"/><rect x="14" y="3" width="1" height="1" fill="#bcac7c"/><rect x="0" y="4" width="1" height="1" fill="#bcac7c"/><rect x="1" y="4" width="2" height="1" fill="#f4f8fe"/><rect x="3" y="4" width="6" height="1" fill="#5088c4"/><rect x="9" y="4" width="1" height="1" fill="#b0cce8"/><rect x="10" y="4" width="2" height="1" fill="#5088c4"/><rect x="12" y="4" width="2" height="1" fill="#f4f8fe"/><rect x="14" y="4" width="1" height="1" fill="#bcac7c"/><rect x="0" y="5" width="1" height="1" fill="#bcac7c"/><rect x="1" y="5" width="2" height="1" fill="#f4f8fe"/><rect x="3" y="5" width="6" height="1" fill="#5088c4"/><rect x="9" y="5" width="1" height="1" fill="#b0cce8"/><rect x="10" y="5" width="2" height="1" fill="#5088c4"/><rect x="12" y="5" width="2" height="1" fill="#f4f8fe"/><rect x="14" y="5" width="1" height="1" fill="#bcac7c"/><rect x="0" y="6" width="1" height="1" fill="#bcac7c"/><rect x="1" y="6" width="3" height="1" fill="#f4f8fe"/><rect x="4" y="6" width="5" height="1" fill="#5088c4"/><rect x="9" y="6" width="1" height="1" fill="#b0cce8"/><rect x="10" y="6" width="2" height="1" fill="#5088c4"/><rect x="12" y="6" width="2" height="1" fill="#f4f8fe"/><rect x="14" y="6" width="1" height="1" fill="#bcac7c"/><rect x="0" y="7" width="1" height="1" fill="#bcac7c"/><rect x="1" y="7" width="5" height="1" fill="#f4f8fe"/><rect x="6" y="7" width="3" height="1" fill="#5088c4"/><rect x="9" y="7" width="1" height="1" fill="#b0cce8"/><rect x="10" y="7" width="2" height="1" fill="#5088c4"/><rect x="12" y="7" width="2" height="1" fill="#f4f8fe"/><rect x="14" y="7" width="1" height="1" fill="#bcac7c"/><rect x="0" y="8" width="1" height="1" fill="#bcac7c"/><rect x="1" y="8" width="5" height="1" fill="#f4f8fe"/><rect x="6" y="8" width="2" height="1" fill="#5088c4"/><rect x="8" y="8" width="2" height="1" fill="#f4f8fe"/><rect x="10" y="8" width="2" height="1" fill="#5088c4"/><rect x="12" y="8" width="2" height="1" fill="#f4f8fe"/><rect x="14" y="8" width="1" height="1" fill="#bcac7c"/><rect x="0" y="9" width="1" height="1" fill="#bcac7c"/><rect x="1" y="9" width="5" height="1" fill="#f4f8fe"/><rect x="6" y="9" width="2" height="1" fill="#5088c4"/><rect x="8" y="9" width="2" height="1" fill="#f4f8fe"/><rect x="10" y="9" width="2" height="1" fill="#5088c4"/><rect x="12" y="9" width="2" height="1" fill="#f4f8fe"/><rect x="14" y="9" width="1" height="1" fill="#bcac7c"/><rect x="0" y="10" width="1" height="1" fill="#bcac7c"/><rect x="1" y="10" width="5" height="1" fill="#f4f8fe"/><rect x="6" y="10" width="2" height="1" fill="#5088c4"/><rect x="8" y="10" width="2" height="1" fill="#f4f8fe"/><rect x="10" y="10" width="2" height="1" fill="#5088c4"/><rect x="12" y="10" width="2" height="1" fill="#f4f8fe"/><rect x="14" y="10" width="1" height="1" fill="#bcac7c"/><rect x="0" y="11" width="1" height="1" fill="#bcac7c"/><rect x="1" y="11" width="5" height="1" fill="#f4f8fe"/><rect x="6" y="11" width="2" height="1" fill="#5088c4"/><rect x="8" y="11" width="2" height="1" fill="#f4f8fe"/><rect x="10" y="11" width="2" height="1" fill="#5088c4"/><rect x="12" y="11" width="2" height="1" fill="#f4f8fe"/><rect x="14" y="11" width="1" height="1" fill="#bcac7c"/><rect x="0" y="12" width="1" height="1" fill="#bcac7c"/><rect x="1" y="12" width="5" height="1" fill="#f4f8fe"/><rect x="6" y="12" width="2" height="1" fill="#5088c4"/><rect x="8" y="12" width="2" height="1" fill="#f4f8fe"/><rect x="10" y="12" width="2" height="1" fill="#5088c4"/><rect x="12" y="12" width="2" height="1" fill="#f4f8fe"/><rect x="14" y="12" width="1" height="1" fill="#bcac7c"/><rect x="0" y="13" width="1" height="1" fill="#bcac7c"/><rect x="1" y="13" width="13" height="1" fill="#f4f8fe"/><rect x="14" y="13" width="1" height="1" fill="#bcac7c"/><rect x="0" y="14" width="15" height="1" fill="#bcac7c"/></svg>
<svg style="left:1130px;top:24px" width="236" height="46"><path d="M0 41.5H34Q42 41.5 48 33L62 12Q68 3.5 80 3.5H236" fill="none" stroke="#fffdf8" stroke-width="1.6"/></svg>
<div class="ab" style="left:960px;top:65px;width:171px;height:1px;background:linear-gradient(90deg,rgba(255,253,248,0),#fffdf8)"></div>
<svg style="left:1225px;top:40px" width="16" height="16"><rect x="0.5" y="2.5" width="11" height="11" fill="#e8f2fc" stroke="#7a7060"/><rect x="1" y="3" width="10" height="2" fill="#3a78c8"/><path d="M4.5 5V13M4.5 8.5H11" stroke="#7a7060"/><g shape-rendering="crispEdges"><rect x="11" y="0" width="1" height="1" fill="#b0901c"/><rect x="10" y="1" width="1" height="1" fill="#b0901c"/><rect x="11" y="1" width="1" height="1" fill="#fff6c8"/><rect x="12" y="1" width="1" height="1" fill="#b0901c"/><rect x="9" y="2" width="1" height="1" fill="#b0901c"/><rect x="10" y="2" width="1" height="1" fill="#b0901c"/><rect x="11" y="2" width="1" height="1" fill="#fff6c8"/><rect x="12" y="2" width="1" height="1" fill="#b0901c"/><rect x="13" y="2" width="1" height="1" fill="#b0901c"/><rect x="8" y="3" width="1" height="1" fill="#b0901c"/><rect x="9" y="3" width="1" height="1" fill="#fff6c8"/><rect x="10" y="3" width="1" height="1" fill="#fff6c8"/><rect x="11" y="3" width="1" height="1" fill="#fff6c8"/><rect x="12" y="3" width="1" height="1" fill="#fff6c8"/><rect x="13" y="3" width="1" height="1" fill="#fff6c8"/><rect x="14" y="3" width="1" height="1" fill="#b0901c"/><rect x="9" y="4" width="1" height="1" fill="#b0901c"/><rect x="10" y="4" width="1" height="1" fill="#b0901c"/><rect x="11" y="4" width="1" height="1" fill="#fff6c8"/><rect x="12" y="4" width="1" height="1" fill="#b0901c"/><rect x="13" y="4" width="1" height="1" fill="#b0901c"/><rect x="10" y="5" width="1" height="1" fill="#b0901c"/><rect x="11" y="5" width="1" height="1" fill="#fff6c8"/><rect x="12" y="5" width="1" height="1" fill="#b0901c"/><rect x="11" y="6" width="1" height="1" fill="#b0901c"/></g></svg>
<svg style="left:1347px;top:41px" width="10" height="7"><path d="M0.5 0.5L3.5 3L0.5 5.5M5 0.5L8 3L5 5.5" fill="none" stroke="#111" stroke-width="1.5"/></svg>
<div class="ab" style="left:3px;top:70px;width:36px;height:76px;border:1px solid #c9b37e;border-radius:0 0 5px 5px;background:#f4ecda"></div>
<div class="ab" style="left:4px;top:71px;width:34px;height:74px;border:1px solid #fffcf2;border-radius:0 0 4px 4px"></div>
<div class="ab" style="left:7px;top:76px;width:28px;height:2px;background:#fffcf2"></div>
<div class="ab" style="left:7px;top:78px;width:28px;height:1px;background:#c9b37e"></div>
<svg style="left:17px;top:92px" width="9" height="8"><rect x="2.5" y="0.5" width="6" height="4" fill="#fff" stroke="#5a5650"/><rect x="0.5" y="3.5" width="6" height="4" fill="#fff" stroke="#5a5650"/></svg>
<svg style="left:13px;top:116px" width="17" height="16"><path d="M0.5 6.5L2 4.5H7V13.5H1Z" fill="#f8e0a0" stroke="#a08040"/><path d="M1 14.5L4 9.5H15.5L12.5 14.5Z" fill="#7ab0f0" stroke="#2a58b0"/><path d="M13 0.5V7Q13 9 10.5 9" fill="none" stroke="#2a60b0" stroke-width="1.8"/></svg>
<div class="ab" style="left:41px;top:68px;width:256px;height:420px;border:1px solid #c9b37e;border-bottom:none;border-radius:6px 6px 0 0;background:#f4ecda"></div>
<svg style="left:41px;top:68px" width="196" height="35"><defs><linearGradient id="g1" x1="0" y1="0" x2="0" y2="1"><stop offset="0" stop-color="#fffefb"/><stop offset="0.35" stop-color="#fdfaf3"/><stop offset="1" stop-color="#f4ecda"/></linearGradient></defs><path d="M0.5 34 V6.5 Q0.5 0.5 6.5 0.5 H143 C165.95 0.5 171.05 33.5 194 33.5 V34 Z" fill="url(#g1)"/><path d="M0.5 34 V6.5 Q0.5 0.5 6.5 0.5 H143 C165.95 0.5 171.05 33.5 194 33.5" fill="none" stroke="#c9b37e" stroke-width="1"/></svg>
<div class="ab" style="left:235px;top:101px;width:61px;height:1px;background:#c9b37e"></div>
<div class="ab" style="left:300px;top:68px;width:802px;height:420px;border:1px solid #c9b37e;border-bottom:none;border-radius:6px 6px 0 0;background:#f4ecda"></div>
<div class="ab" style="left:301px;top:101px;width:160px;height:1px;background:#c9b37e"></div>
<svg style="left:461px;top:68px" width="176" height="35"><defs><linearGradient id="g2" x1="0" y1="0" x2="0" y2="1"><stop offset="0" stop-color="#f2efea"/><stop offset="0.15" stop-color="#e6e1d8"/><stop offset="1" stop-color="#b0aa9f"/></linearGradient></defs><path d="M0.5 34 V6.5 Q0.5 0.5 6.5 0.5 H128 C148.7 0.5 153.3 33.5 174 33.5 V34 Z" fill="url(#g2)"/><path d="M0.5 34 V6.5 Q0.5 0.5 6.5 0.5 H128 C148.7 0.5 153.3 33.5 174 33.5" fill="none" stroke="#c9b37e" stroke-width="1"/></svg>
<div class="ab" style="left:635px;top:101px;width:466px;height:1px;background:#c9b37e"></div>
<div class="ab" style="left:1105px;top:68px;width:256px;height:420px;border:1px solid #c9b37e;border-bottom:none;border-radius:6px 6px 0 0;background:#f4ecda"></div>
<svg style="left:1105px;top:68px" width="143" height="35"><defs><linearGradient id="g3" x1="0" y1="0" x2="0" y2="1"><stop offset="0" stop-color="#fffefb"/><stop offset="0.35" stop-color="#fdfaf3"/><stop offset="1" stop-color="#f4ecda"/></linearGradient></defs><path d="M0.5 34 V6.5 Q0.5 0.5 6.5 0.5 H92 C114.05 0.5 118.95 33.5 141 33.5 V34 Z" fill="url(#g3)"/><path d="M0.5 34 V6.5 Q0.5 0.5 6.5 0.5 H92 C114.05 0.5 118.95 33.5 141 33.5" fill="none" stroke="#c9b37e" stroke-width="1"/></svg>
<div class="ab" style="left:1246px;top:101px;width:114px;height:1px;background:#c9b37e"></div>
<div class="ab" style="left:262px;top:78px;width:10px;height:4px;border:1px solid #000;background:#fff"></div>
<div class="ab" style="left:280px;top:78px;width:10px;height:10px;border:1px solid #000;background:#fff"></div>
<div class="ab" style="left:281px;top:80px;width:8px;height:1px;background:#000"></div>
<div class="ab" style="left:1067px;top:78px;width:10px;height:4px;border:1px solid #000;background:#fff"></div>
<div class="ab" style="left:1085px;top:78px;width:10px;height:10px;border:1px solid #000;background:#fff"></div>
<div class="ab" style="left:1086px;top:80px;width:8px;height:1px;background:#000"></div>
<div class="ab" style="left:1326px;top:78px;width:10px;height:4px;border:1px solid #000;background:#fff"></div>
<div class="ab" style="left:1344px;top:78px;width:10px;height:10px;border:1px solid #000;background:#fff"></div>
<div class="ab" style="left:1345px;top:80px;width:8px;height:1px;background:#000"></div>
<div class="t" style="left:65px;top:74px;letter-spacing:0.17px">Package Explorer</div>
<svg style="left:185px;top:80px" width="10" height="10" shape-rendering="crispEdges"><rect x="0" y="0" width="1" height="1" fill="#000"/><rect x="1" y="0" width="1" height="1" fill="#000"/><rect x="2" y="0" width="1" height="1" fill="#000"/><rect x="7" y="0" width="1" height="1" fill="#000"/><rect x="8" y="0" width="1" height="1" fill="#000"/><rect x="9" y="0" width="1" height="1" fill="#000"/><rect x="0" y="1" width="1" height="1" fill="#000"/><rect x="1" y="1" width="1" height="1" fill="#fff"/><rect x="2" y="1" width="1" height="1" fill="#fff"/><rect x="3" y="1" width="1" height="1" fill="#000"/><rect x="6" y="1" width="1" height="1" fill="#000"/><rect x="7" y="1" width="1" height="1" fill="#fff"/><rect x="8" y="1" width="1" height="1" fill="#fff"/><rect x="9" y="1" width="1" height="1" fill="#000"/><rect x="0" y="2" width="1" height="1" fill="#000"/><rect x="1" y="2" width="1" height="1" fill="#fff"/><rect x="2" y="2" width="1" height="1" fill="#fff"/><rect x="3" y="2" width="1" height="1" fill="#fff"/><rect x="4" y="2" width="1" height="1" fill="#000"/><rect x="5" y="2" width="1" height="1" fill="#000"/><rect x="6" y="2" width="1" height="1" fill="#fff"/><rect x="7" y="2" width="1" height="1" fill="#fff"/><rect x="8" y="2" width="1" height="1" fill="#fff"/><rect x="9" y="2" width="1" height="1" fill="#000"/><rect x="1" y="3" width="1" height="1" fill="#000"/><rect x="2" y="3" width="1" height="1" fill="#fff"/><rect x="3" y="3" width="1" height="1" fill="#fff"/><rect x="4" y="3" width="1" height="1" fill="#fff"/><rect x="5" y="3" width="1" height="1" fill="#fff"/><rect x="6" y="3" width="1" height="1" fill="#fff"/><rect x="7" y="3" width="1" height="1" fill="#fff"/><rect x="8" y="3" width="1" height="1" fill="#000"/><rect x="2" y="4" width="1" height="1" fill="#000"/><rect x="3" y="4" width="1" height="1" fill="#fff"/><rect x="4" y="4" width="1" height="1" fill="#fff"/><rect x="5" y="4" width="1" height="1" fill="#fff"/><rect x="6" y="4" width="1" height="1" fill="#fff"/><rect x="7" y="4" width="1" height="1" fill="#000"/><rect x="2" y="5" width="1" height="1" fill="#000"/><rect x="3" y="5" width="1" height="1" fill="#fff"/><rect x="4" y="5" width="1" height="1" fill="#fff"/><rect x="5" y="5" width="1" height="1" fill="#fff"/><rect x="6" y="5" width="1" height="1" fill="#fff"/><rect x="7" y="5" width="1" height="1" fill="#000"/><rect x="1" y="6" width="1" height="1" fill="#000"/><rect x="2" y="6" width="1" height="1" fill="#fff"/><rect x="3" y="6" width="1" height="1" fill="#fff"/><rect x="4" y="6" width="1" height="1" fill="#fff"/><rect x="5" y="6" width="1" height="1" fill="#fff"/><rect x="6" y="6" width="1" height="1" fill="#fff"/><rect x="7" y="6" width="1" height="1" fill="#fff"/><rect x="8" y="6" width="1" height="1" fill="#000"/><rect x="0" y="7" width="1" height="1" fill="#000"/><rect x="1" y="7" width="1" height="1" fill="#fff"/><rect x="2" y="7" width="1" height="1" fill="#fff"/><rect x="3" y="7" width="1" height="1" fill="#fff"/><rect x="4" y="7" width="1" height="1" fill="#000"/><rect x="5" y="7" width="1" height="1" fill="#000"/><rect x="6" y="7" width="1" height="1" fill="#fff"/><rect x="7" y="7" width="1" height="1" fill="#fff"/><rect x="8" y="7" width="1" height="1" fill="#fff"/><rect x="9" y="7" width="1" height="1" fill="#000"/><rect x="0" y="8" width="1" height="1" fill="#000"/><rect x="1" y="8" width="1" height="1" fill="#fff"/><rect x="2" y="8" width="1" height="1" fill="#fff"/><rect x="3" y="8" width="1" height="1" fill="#000"/><rect x="6" y="8" width="1" height="1" fill="#000"/><rect x="7" y="8" width="1" height="1" fill="#fff"/><rect x="8" y="8" width="1" height="1" fill="#fff"/><rect x="9" y="8" width="1" height="1" fill="#000"/><rect x="0" y="9" width="1" height="1" fill="#000"/><rect x="1" y="9" width="1" height="1" fill="#000"/><rect x="2" y="9" width="1" height="1" fill="#000"/><rect x="7" y="9" width="1" height="1" fill="#000"/><rect x="8" y="9" width="1" height="1" fill="#000"/><rect x="9" y="9" width="1" height="1" fill="#000"/></svg>
<svg style="left:49px;top:78px" width="9" height="13" shape-rendering="crispEdges"><rect x="0" y="0" width="1" height="1" fill="#5a6a8a"/><rect x="0" y="1" width="1" height="1" fill="#5a6a8a"/><rect x="4" y="1" width="5" height="1" fill="#b8651e"/><rect x="0" y="2" width="1" height="1" fill="#5a6a8a"/><rect x="4" y="2" width="1" height="1" fill="#b8651e"/><rect x="5" y="2" width="1" height="1" fill="#fff2c0"/><rect x="6" y="2" width="1" height="1" fill="#b8651e"/><rect x="7" y="2" width="1" height="1" fill="#fff2c0"/><rect x="8" y="2" width="1" height="1" fill="#b8651e"/><rect x="0" y="3" width="4" height="1" fill="#5a6a8a"/><rect x="4" y="3" width="5" height="1" fill="#b8651e"/><rect x="0" y="4" width="1" height="1" fill="#5a6a8a"/><rect x="4" y="4" width="1" height="1" fill="#b8651e"/><rect x="5" y="4" width="1" height="1" fill="#fff2c0"/><rect x="6" y="4" width="1" height="1" fill="#b8651e"/><rect x="7" y="4" width="1" height="1" fill="#fff2c0"/><rect x="8" y="4" width="1" height="1" fill="#b8651e"/><rect x="0" y="5" width="1" height="1" fill="#5a6a8a"/><rect x="4" y="5" width="5" height="1" fill="#b8651e"/><rect x="0" y="6" width="1" height="1" fill="#5a6a8a"/><rect x="0" y="7" width="1" height="1" fill="#5a6a8a"/><rect x="4" y="7" width="5" height="1" fill="#b8651e"/><rect x="0" y="8" width="1" height="1" fill="#5a6a8a"/><rect x="4" y="8" width="1" height="1" fill="#b8651e"/><rect x="5" y="8" width="1" height="1" fill="#fff2c0"/><rect x="6" y="8" width="1" height="1" fill="#b8651e"/><rect x="7" y="8" width="1" height="1" fill="#fff2c0"/><rect x="8" y="8" width="1" height="1" fill="#b8651e"/><rect x="0" y="9" width="4" height="1" fill="#5a6a8a"/><rect x="4" y="9" width="5" height="1" fill="#b8651e"/><rect x="0" y="10" width="1" height="1" fill="#5a6a8a"/><rect x="4" y="10" width="1" height="1" fill="#b8651e"/><rect x="5" y="10" width="1" height="1" fill="#fff2c0"/><rect x="6" y="10" width="1" height="1" fill="#b8651e"/><rect x="7" y="10" width="1" height="1" fill="#fff2c0"/><rect x="8" y="10" width="1" height="1" fill="#b8651e"/><rect x="0" y="11" width="1" height="1" fill="#5a6a8a"/><rect x="4" y="11" width="5" height="1" fill="#b8651e"/><rect x="0" y="12" width="1" height="1" fill="#5a6a8a"/></svg>
<svg style="left:307px;top:78px" width="11" height="14" shape-rendering="crispEdges"><rect x="0" y="0" width="7" height="1" fill="#9a7a38"/><rect x="7" y="0" width="1" height="1" fill="#e6c97e"/><rect x="0" y="1" width="1" height="1" fill="#9a7a38"/><rect x="1" y="1" width="5" height="1" fill="#eef3fb"/><rect x="6" y="1" width="1" height="1" fill="#9a7a38"/><rect x="7" y="1" width="2" height="1" fill="#e6c97e"/><rect x="0" y="2" width="1" height="1" fill="#9a7a38"/><rect x="1" y="2" width="5" height="1" fill="#eef3fb"/><rect x="6" y="2" width="1" height="1" fill="#9a7a38"/><rect x="7" y="2" width="3" height="1" fill="#e6c97e"/><rect x="0" y="3" width="1" height="1" fill="#9a7a38"/><rect x="1" y="3" width="4" height="1" fill="#eef3fb"/><rect x="5" y="3" width="2" height="1" fill="#2d62a6"/><rect x="7" y="3" width="4" height="1" fill="#9a7a38"/><rect x="0" y="4" width="1" height="1" fill="#9a7a38"/><rect x="1" y="4" width="4" height="1" fill="#eef3fb"/><rect x="5" y="4" width="2" height="1" fill="#2d62a6"/><rect x="7" y="4" width="3" height="1" fill="#eef3fb"/><rect x="10" y="4" width="1" height="1" fill="#9a7a38"/><rect x="0" y="5" width="1" height="1" fill="#9a7a38"/><rect x="1" y="5" width="4" height="1" fill="#eef3fb"/><rect x="5" y="5" width="2" height="1" fill="#2d62a6"/><rect x="7" y="5" width="3" height="1" fill="#eef3fb"/><rect x="10" y="5" width="1" height="1" fill="#9a7a38"/><rect x="0" y="6" width="1" height="1" fill="#9a7a38"/><rect x="1" y="6" width="4" height="1" fill="#eef3fb"/><rect x="5" y="6" width="2" height="1" fill="#2d62a6"/><rect x="7" y="6" width="3" height="1" fill="#eef3fb"/><rect x="10" y="6" width="1" height="1" fill="#9a7a38"/><rect x="0" y="7" width="1" height="1" fill="#9a7a38"/><rect x="1" y="7" width="4" height="1" fill="#eef3fb"/><rect x="5" y="7" width="2" height="1" fill="#2d62a6"/><rect x="7" y="7" width="3" height="1" fill="#eef3fb"/><rect x="10" y="7" width="1" height="1" fill="#9a7a38"/><rect x="0" y="8" width="1" height="1" fill="#9a7a38"/><rect x="1" y="8" width="4" height="1" fill="#eef3fb"/><rect x="5" y="8" width="2" height="1" fill="#2d62a6"/><rect x="7" y="8" width="3" height="1" fill="#eef3fb"/><rect x="10" y="8" width="1" height="1" fill="#9a7a38"/><rect x="0" y="9" width="1" height="1" fill="#9a7a38"/><rect x="1" y="9" width="1" height="1" fill="#eef3fb"/><rect x="2" y="9" width="1" height="1" fill="#2d62a6"/><rect x="3" y="9" width="2" height="1" fill="#eef3fb"/><rect x="5" y="9" width="2" height="1" fill="#2d62a6"/><rect x="7" y="9" width="3" height="1" fill="#eef3fb"/><rect x="10" y="9" width="1" height="1" fill="#9a7a38"/><rect x="0" y="10" width="1" height="1" fill="#9a7a38"/><rect x="1" y="10" width="1" height="1" fill="#eef3fb"/><rect x="2" y="10" width="4" height="1" fill="#2d62a6"/><rect x="6" y="10" width="4" height="1" fill="#eef3fb"/><rect x="10" y="10" width="1" height="1" fill="#9a7a38"/><rect x="0" y="11" width="1" height="1" fill="#9a7a38"/><rect x="1" y="11" width="2" height="1" fill="#eef3fb"/><rect x="3" y="11" width="2" height="1" fill="#2d62a6"/><rect x="5" y="11" width="5" height="1" fill="#eef3fb"/><rect x="10" y="11" width="1" height="1" fill="#9a7a38"/><rect x="0" y="12" width="1" height="1" fill="#9a7a38"/><rect x="1" y="12" width="9" height="1" fill="#eef3fb"/><rect x="10" y="12" width="1" height="1" fill="#9a7a38"/><rect x="0" y="13" width="11" height="1" fill="#9a7a38"/></svg>
<div class="t" style="left:323px;top:74px;letter-spacing:0.4px">*SomeClass.java</div>
<svg style="left:468px;top:78px" width="11" height="14" shape-rendering="crispEdges"><rect x="0" y="0" width="7" height="1" fill="#9a7a38"/><rect x="7" y="0" width="1" height="1" fill="#e6c97e"/><rect x="0" y="1" width="1" height="1" fill="#9a7a38"/><rect x="1" y="1" width="5" height="1" fill="#eef3fb"/><rect x="6" y="1" width="1" height="1" fill="#9a7a38"/><rect x="7" y="1" width="2" height="1" fill="#e6c97e"/><rect x="0" y="2" width="1" height="1" fill="#9a7a38"/><rect x="1" y="2" width="5" height="1" fill="#eef3fb"/><rect x="6" y="2" width="1" height="1" fill="#9a7a38"/><rect x="7" y="2" width="3" height="1" fill="#e6c97e"/><rect x="0" y="3" width="1" height="1" fill="#9a7a38"/><rect x="1" y="3" width="4" height="1" fill="#eef3fb"/><rect x="5" y="3" width="2" height="1" fill="#2d62a6"/><rect x="7" y="3" width="4" height="1" fill="#9a7a38"/><rect x="0" y="4" width="1" height="1" fill="#9a7a38"/><rect x="1" y="4" width="4" height="1" fill="#eef3fb"/><rect x="5" y="4" width="2" height="1" fill="#2d62a6"/><rect x="7" y="4" width="3" height="1" fill="#eef3fb"/><rect x="10" y="4" width="1" height="1" fill="#9a7a38"/><rect x="0" y="5" width="1" height="1" fill="#9a7a38"/><rect x="1" y="5" width="4" height="1" fill="#eef3fb"/><rect x="5" y="5" width="2" height="1" fill="#2d62a6"/><rect x="7" y="5" width="3" height="1" fill="#eef3fb"/><rect x="10" y="5" width="1" height="1" fill="#9a7a38"/><rect x="0" y="6" width="1" height="1" fill="#9a7a38"/><rect x="1" y="6" width="4" height="1" fill="#eef3fb"/><rect x="5" y="6" width="2" height="1" fill="#2d62a6"/><rect x="7" y="6" width="3" height="1" fill="#eef3fb"/><rect x="10" y="6" width="1" height="1" fill="#9a7a38"/><rect x="0" y="7" width="1" height="1" fill="#9a7a38"/><rect x="1" y="7" width="4" height="1" fill="#eef3fb"/><rect x="5" y="7" width="2" height="1" fill="#2d62a6"/><rect x="7" y="7" width="3" height="1" fill="#eef3fb"/><rect x="10" y="7" width="1" height="1" fill="#9a7a38"/><rect x="0" y="8" width="1" height="1" fill="#9a7a38"/><rect x="1" y="8" width="4" height="1" fill="#eef3fb"/><rect x="5" y="8" width="2" height="1" fill="#2d62a6"/><rect x="7" y="8" width="3" height="1" fill="#eef3fb"/><rect x="10" y="8" width="1" height="1" fill="#9a7a38"/><rect x="0" y="9" width="1" height="1" fill="#9a7a38"/><rect x="1" y="9" width="1" height="1" fill="#eef3fb"/><rect x="2" y="9" width="1" height="1" fill="#2d62a6"/><rect x="3" y="9" width="2" height="1" fill="#eef3fb"/><rect x="5" y="9" width="2" height="1" fill="#2d62a6"/><rect x="7" y="9" width="3" height="1" fill="#eef3fb"/><rect x="10" y="9" width="1" height="1" fill="#9a7a38"/><rect x="0" y="10" width="1" height="1" fill="#9a7a38"/><rect x="1" y="10" width="1" height="1" fill="#eef3fb"/><rect x="2" y="10" width="4" height="1" fill="#2d62a6"/><rect x="6" y="10" width="4" height="1" fill="#eef3fb"/><rect x="10" y="10" width="1" height="1" fill="#9a7a38"/><rect x="0" y="11" width="1" height="1" fill="#9a7a38"/><rect x="1" y="11" width="2" height="1" fill="#eef3fb"/><rect x="3" y="11" width="2" height="1" fill="#2d62a6"/><rect x="5" y="11" width="5" height="1" fill="#eef3fb"/><rect x="10" y="11" width="1" height="1" fill="#9a7a38"/><rect x="0" y="12" width="1" height="1" fill="#9a7a38"/><rect x="1" y="12" width="9" height="1" fill="#eef3fb"/><rect x="10" y="12" width="1" height="1" fill="#9a7a38"/><rect x="0" y="13" width="11" height="1" fill="#9a7a38"/></svg>
<div class="t" style="left:485px;top:74px;letter-spacing:0.55px">Computer.java</div>
<svg style="left:588px;top:80px" width="10" height="10" shape-rendering="crispEdges"><rect x="0" y="0" width="1" height="1" fill="#000"/><rect x="1" y="0" width="1" height="1" fill="#000"/><rect x="2" y="0" width="1" height="1" fill="#000"/><rect x="7" y="0" width="1" height="1" fill="#000"/><rect x="8" y="0" width="1" height="1" fill="#000"/><rect x="9" y="0" width="1" height="1" fill="#000"/><rect x="0" y="1" width="1" height="1" fill="#000"/><rect x="1" y="1" width="1" height="1" fill="#fff"/><rect x="2" y="1" width="1" height="1" fill="#fff"/><rect x="3" y="1" width="1" height="1" fill="#000"/><rect x="6" y="1" width="1" height="1" fill="#000"/><rect x="7" y="1" width="1" height="1" fill="#fff"/><rect x="8" y="1" width="1" height="1" fill="#fff"/><rect x="9" y="1" width="1" height="1" fill="#000"/><rect x="0" y="2" width="1" height="1" fill="#000"/><rect x="1" y="2" width="1" height="1" fill="#fff"/><rect x="2" y="2" width="1" height="1" fill="#fff"/><rect x="3" y="2" width="1" height="1" fill="#fff"/><rect x="4" y="2" width="1" height="1" fill="#000"/><rect x="5" y="2" width="1" height="1" fill="#000"/><rect x="6" y="2" width="1" height="1" fill="#fff"/><rect x="7" y="2" width="1" height="1" fill="#fff"/><rect x="8" y="2" width="1" height="1" fill="#fff"/><rect x="9" y="2" width="1" height="1" fill="#000"/><rect x="1" y="3" width="1" height="1" fill="#000"/><rect x="2" y="3" width="1" height="1" fill="#fff"/><rect x="3" y="3" width="1" height="1" fill="#fff"/><rect x="4" y="3" width="1" height="1" fill="#fff"/><rect x="5" y="3" width="1" height="1" fill="#fff"/><rect x="6" y="3" width="1" height="1" fill="#fff"/><rect x="7" y="3" width="1" height="1" fill="#fff"/><rect x="8" y="3" width="1" height="1" fill="#000"/><rect x="2" y="4" width="1" height="1" fill="#000"/><rect x="3" y="4" width="1" height="1" fill="#fff"/><rect x="4" y="4" width="1" height="1" fill="#fff"/><rect x="5" y="4" width="1" height="1" fill="#fff"/><rect x="6" y="4" width="1" height="1" fill="#fff"/><rect x="7" y="4" width="1" height="1" fill="#000"/><rect x="2" y="5" width="1" height="1" fill="#000"/><rect x="3" y="5" width="1" height="1" fill="#fff"/><rect x="4" y="5" width="1" height="1" fill="#fff"/><rect x="5" y="5" width="1" height="1" fill="#fff"/><rect x="6" y="5" width="1" height="1" fill="#fff"/><rect x="7" y="5" width="1" height="1" fill="#000"/><rect x="1" y="6" width="1" height="1" fill="#000"/><rect x="2" y="6" width="1" height="1" fill="#fff"/><rect x="3" y="6" width="1" height="1" fill="#fff"/><rect x="4" y="6" width="1" height="1" fill="#fff"/><rect x="5" y="6" width="1" height="1" fill="#fff"/><rect x="6" y="6" width="1" height="1" fill="#fff"/><rect x="7" y="6" width="1" height="1" fill="#fff"/><rect x="8" y="6" width="1" height="1" fill="#000"/><rect x="0" y="7" width="1" height="1" fill="#000"/><rect x="1" y="7" width="1" height="1" fill="#fff"/><rect x="2" y="7" width="1" height="1" fill="#fff"/><rect x="3" y="7" width="1" height="1" fill="#fff"/><rect x="4" y="7" width="1" height="1" fill="#000"/><rect x="5" y="7" width="1" height="1" fill="#000"/><rect x="6" y="7" width="1" height="1" fill="#fff"/><rect x="7" y="7" width="1" height="1" fill="#fff"/><rect x="8" y="7" width="1" height="1" fill="#fff"/><rect x="9" y="7" width="1" height="1" fill="#000"/><rect x="0" y="8" width="1" height="1" fill="#000"/><rect x="1" y="8" width="1" height="1" fill="#fff"/><rect x="2" y="8" width="1" height="1" fill="#fff"/><rect x="3" y="8" width="1" height="1" fill="#000"/><rect x="6" y="8" width="1" height="1" fill="#000"/><rect x="7" y="8" width="1" height="1" fill="#fff"/><rect x="8" y="8" width="1" height="1" fill="#fff"/><rect x="9" y="8" width="1" height="1" fill="#000"/><rect x="0" y="9" width="1" height="1" fill="#000"/><rect x="1" y="9" width="1" height="1" fill="#000"/><rect x="2" y="9" width="1" height="1" fill="#000"/><rect x="7" y="9" width="1" height="1" fill="#000"/><rect x="8" y="9" width="1" height="1" fill="#000"/><rect x="9" y="9" width="1" height="1" fill="#000"/></svg>
<div class="t" style="left:1128px;top:74px;letter-spacing:0.73px">Members</div>
<svg style="left:1197px;top:80px" width="10" height="10" shape-rendering="crispEdges"><rect x="0" y="0" width="1" height="1" fill="#000"/><rect x="1" y="0" width="1" height="1" fill="#000"/><rect x="2" y="0" width="1" height="1" fill="#000"/><rect x="7" y="0" width="1" height="1" fill="#000"/><rect x="8" y="0" width="1" height="1" fill="#000"/><rect x="9" y="0" width="1" height="1" fill="#000"/><rect x="0" y="1" width="1" height="1" fill="#000"/><rect x="1" y="1" width="1" height="1" fill="#fff"/><rect x="2" y="1" width="1" height="1" fill="#fff"/><rect x="3" y="1" width="1" height="1" fill="#000"/><rect x="6" y="1" width="1" height="1" fill="#000"/><rect x="7" y="1" width="1" height="1" fill="#fff"/><rect x="8" y="1" width="1" height="1" fill="#fff"/><rect x="9" y="1" width="1" height="1" fill="#000"/><rect x="0" y="2" width="1" height="1" fill="#000"/><rect x="1" y="2" width="1" height="1" fill="#fff"/><rect x="2" y="2" width="1" height="1" fill="#fff"/><rect x="3" y="2" width="1" height="1" fill="#fff"/><rect x="4" y="2" width="1" height="1" fill="#000"/><rect x="5" y="2" width="1" height="1" fill="#000"/><rect x="6" y="2" width="1" height="1" fill="#fff"/><rect x="7" y="2" width="1" height="1" fill="#fff"/><rect x="8" y="2" width="1" height="1" fill="#fff"/><rect x="9" y="2" width="1" height="1" fill="#000"/><rect x="1" y="3" width="1" height="1" fill="#000"/><rect x="2" y="3" width="1" height="1" fill="#fff"/><rect x="3" y="3" width="1" height="1" fill="#fff"/><rect x="4" y="3" width="1" height="1" fill="#fff"/><rect x="5" y="3" width="1" height="1" fill="#fff"/><rect x="6" y="3" width="1" height="1" fill="#fff"/><rect x="7" y="3" width="1" height="1" fill="#fff"/><rect x="8" y="3" width="1" height="1" fill="#000"/><rect x="2" y="4" width="1" height="1" fill="#000"/><rect x="3" y="4" width="1" height="1" fill="#fff"/><rect x="4" y="4" width="1" height="1" fill="#fff"/><rect x="5" y="4" width="1" height="1" fill="#fff"/><rect x="6" y="4" width="1" height="1" fill="#fff"/><rect x="7" y="4" width="1" height="1" fill="#000"/><rect x="2" y="5" width="1" height="1" fill="#000"/><rect x="3" y="5" width="1" height="1" fill="#fff"/><rect x="4" y="5" width="1" height="1" fill="#fff"/><rect x="5" y="5" width="1" height="1" fill="#fff"/><rect x="6" y="5" width="1" height="1" fill="#fff"/><rect x="7" y="5" width="1" height="1" fill="#000"/><rect x="1" y="6" width="1" height="1" fill="#000"/><rect x="2" y="6" width="1" height="1" fill="#fff"/><rect x="3" y="6" width="1" height="1" fill="#fff"/><rect x="4" y="6" width="1" height="1" fill="#fff"/><rect x="5" y="6" width="1" height="1" fill="#fff"/><rect x="6" y="6" width="1" height="1" fill="#fff"/><rect x="7" y="6" width="1" height="1" fill="#fff"/><rect x="8" y="6" width="1" height="1" fill="#000"/><rect x="0" y="7" width="1" height="1" fill="#000"/><rect x="1" y="7" width="1" height="1" fill="#fff"/><rect x="2" y="7" width="1" height="1" fill="#fff"/><rect x="3" y="7" width="1" height="1" fill="#fff"/><rect x="4" y="7" width="1" height="1" fill="#000"/><rect x="5" y="7" width="1" height="1" fill="#000"/><rect x="6" y="7" width="1" height="1" fill="#fff"/><rect x="7" y="7" width="1" height="1" fill="#fff"/><rect x="8" y="7" width="1" height="1" fill="#fff"/><rect x="9" y="7" width="1" height="1" fill="#000"/><rect x="0" y="8" width="1" height="1" fill="#000"/><rect x="1" y="8" width="1" height="1" fill="#fff"/><rect x="2" y="8" width="1" height="1" fill="#fff"/><rect x="3" y="8" width="1" height="1" fill="#000"/><rect x="6" y="8" width="1" height="1" fill="#000"/><rect x="7" y="8" width="1" height="1" fill="#fff"/><rect x="8" y="8" width="1" height="1" fill="#fff"/><rect x="9" y="8" width="1" height="1" fill="#000"/><rect x="0" y="9" width="1" height="1" fill="#000"/><rect x="1" y="9" width="1" height="1" fill="#000"/><rect x="2" y="9" width="1" height="1" fill="#000"/><rect x="7" y="9" width="1" height="1" fill="#000"/><rect x="8" y="9" width="1" height="1" fill="#000"/><rect x="9" y="9" width="1" height="1" fill="#000"/></svg>
<svg style="left:1110px;top:78px" width="14" height="14"><rect x="0.5" y="0.5" width="5" height="5" fill="#e05a6a" stroke="#b03040" stroke-width="0.8"/><circle cx="11" cy="3" r="2.8" fill="#38a050" stroke="#207030" stroke-width="0.8"/><path d="M3 8L6 13.5H0Z" fill="#2050a8"/><path d="M11 8L13.8 10.8L11 13.6L8.2 10.8Z" fill="#f8c040" stroke="#c08010" stroke-width="0.8"/></svg>
<svg style="left:216px;top:114px" width="13" height="13" shape-rendering="crispEdges"><rect x="0" y="0" width="11" height="1" fill="#8e9cbc"/><rect x="0" y="1" width="1" height="1" fill="#8e9cbc"/><rect x="1" y="1" width="9" height="1" fill="#e4f2fc"/><rect x="10" y="1" width="1" height="1" fill="#8e9cbc"/><rect x="0" y="2" width="1" height="1" fill="#8e9cbc"/><rect x="1" y="2" width="1" height="1" fill="#e4f2fc"/><rect x="2" y="2" width="11" height="1" fill="#8e9cbc"/><rect x="0" y="3" width="1" height="1" fill="#8e9cbc"/><rect x="1" y="3" width="1" height="1" fill="#e4f2fc"/><rect x="2" y="3" width="1" height="1" fill="#8e9cbc"/><rect x="3" y="3" width="9" height="1" fill="#e4f2fc"/><rect x="12" y="3" width="1" height="1" fill="#8e9cbc"/><rect x="0" y="4" width="1" height="1" fill="#8e9cbc"/><rect x="1" y="4" width="1" height="1" fill="#e4f2fc"/><rect x="2" y="4" width="1" height="1" fill="#8e9cbc"/><rect x="3" y="4" width="9" height="1" fill="#e4f2fc"/><rect x="12" y="4" width="1" height="1" fill="#8e9cbc"/><rect x="0" y="5" width="1" height="1" fill="#8e9cbc"/><rect x="1" y="5" width="1" height="1" fill="#e4f2fc"/><rect x="2" y="5" width="1" height="1" fill="#8e9cbc"/><rect x="3" y="5" width="9" height="1" fill="#e4f2fc"/><rect x="12" y="5" width="1" height="1" fill="#8e9cbc"/><rect x="0" y="6" width="1" height="1" fill="#8e9cbc"/><rect x="1" y="6" width="1" height="1" fill="#e4f2fc"/><rect x="2" y="6" width="1" height="1" fill="#8e9cbc"/><rect x="3" y="6" width="9" height="1" fill="#e4f2fc"/><rect x="12" y="6" width="1" height="1" fill="#8e9cbc"/><rect x="0" y="7" width="1" height="1" fill="#8e9cbc"/><rect x="1" y="7" width="1" height="1" fill="#e4f2fc"/><rect x="2" y="7" width="1" height="1" fill="#8e9cbc"/><rect x="3" y="7" width="1" height="1" fill="#e4f2fc"/><rect x="4" y="7" width="7" height="1" fill="#1a4a8a"/><rect x="11" y="7" width="1" height="1" fill="#e4f2fc"/><rect x="12" y="7" width="1" height="1" fill="#8e9cbc"/><rect x="0" y="8" width="1" height="1" fill="#8e9cbc"/><rect x="1" y="8" width="1" height="1" fill="#e4f2fc"/><rect x="2" y="8" width="1" height="1" fill="#8e9cbc"/><rect x="3" y="8" width="9" height="1" fill="#e4f2fc"/><rect x="12" y="8" width="1" height="1" fill="#8e9cbc"/><rect x="0" y="9" width="1" height="1" fill="#8e9cbc"/><rect x="1" y="9" width="1" height="1" fill="#e4f2fc"/><rect x="2" y="9" width="1" height="1" fill="#8e9cbc"/><rect x="3" y="9" width="9" height="1" fill="#e4f2fc"/><rect x="12" y="9" width="1" height="1" fill="#8e9cbc"/><rect x="0" y="10" width="3" height="1" fill="#8e9cbc"/><rect x="3" y="10" width="9" height="1" fill="#e4f2fc"/><rect x="12" y="10" width="1" height="1" fill="#8e9cbc"/><rect x="2" y="11" width="1" height="1" fill="#8e9cbc"/><rect x="3" y="11" width="9" height="1" fill="#e4f2fc"/><rect x="12" y="11" width="1" height="1" fill="#8e9cbc"/><rect x="2" y="12" width="11" height="1" fill="#8e9cbc"/></svg>
<div class="ab" style="left:237px;top:107px;width:26px;height:26px;border:1px solid #c8b288;border-radius:3px;background:linear-gradient(#ecdfbd,#d8c69a)"></div>
<svg style="left:240px;top:110px" width="19" height="19"><defs><linearGradient id="lk" x1="0" y1="0" x2="0" y2="1"><stop offset="0" stop-color="#fffce8"/><stop offset="1" stop-color="#f0c040"/></linearGradient></defs><path d="M2 7.5L6.5 3.5V6.3H14.5V8.7H6.5V11.5Z" fill="url(#lk)" stroke="#c08010" stroke-width="0.9"/><path d="M17.5 14L13 10V12.8H5V15.2H13V18Z" fill="url(#lk)" stroke="#c08010" stroke-width="0.9"/></svg>
<svg style="left:276px;top:113px" width="11" height="7"><path d="M0.6 0.6H10.4L5.5 5Z" fill="#fff" stroke="#000" stroke-width="1.2" stroke-linejoin="miter"/></svg>
<div class="ab" style="left:44px;top:137px;width:250px;height:1px;background:#c9b37e"></div>
<div class="ab" style="left:44px;top:138px;width:233px;height:341px;background:#fff"></div>
<div class="ab" style="left:277px;top:138px;width:17px;height:341px;background:#f4ecda"></div>
<div class="ab" style="left:279px;top:138px;width:15px;height:351px;border:1px solid #dccca0;border-radius:3px;background:linear-gradient(90deg,#f1e8d4,#fdfbf6 60%,#f6f0e2)"></div>
<svg style="left:283px;top:143px" width="9" height="6"><path d="M1 4.8L4.5 1.3L8 4.8" fill="none" stroke="#dcc288" stroke-width="1.5"/></svg>
<div class="ab" style="left:279px;top:153px;width:15px;height:279px;border:1px solid #c89a3a;background:linear-gradient(90deg,#f8d070,#f0bf50)"></div>
<svg style="left:279px;top:153px" width="15" height="279"><circle cx="7.5" cy="7" r="1.9" fill="#e6b448"/><circle cx="7.5" cy="16" r="1.9" fill="#e6b448"/><circle cx="7.5" cy="25" r="1.9" fill="#e6b448"/><circle cx="7.5" cy="34" r="1.9" fill="#e6b448"/><circle cx="7.5" cy="43" r="1.9" fill="#e6b448"/><circle cx="7.5" cy="52" r="1.9" fill="#e6b448"/><circle cx="7.5" cy="61" r="1.9" fill="#e6b448"/><circle cx="7.5" cy="70" r="1.9" fill="#e6b448"/><circle cx="7.5" cy="79" r="1.9" fill="#e6b448"/><circle cx="7.5" cy="88" r="1.9" fill="#e6b448"/><circle cx="7.5" cy="97" r="1.9" fill="#e6b448"/><circle cx="7.5" cy="106" r="1.9" fill="#e6b448"/><circle cx="7.5" cy="115" r="1.9" fill="#e6b448"/><circle cx="7.5" cy="124" r="1.9" fill="#e6b448"/><circle cx="7.5" cy="133" r="1.9" fill="#e6b448"/><circle cx="7.5" cy="142" r="1.9" fill="#e6b448"/><circle cx="7.5" cy="151" r="1.9" fill="#e6b448"/><circle cx="7.5" cy="160" r="1.9" fill="#e6b448"/><circle cx="7.5" cy="169" r="1.9" fill="#e6b448"/><circle cx="7.5" cy="178" r="1.9" fill="#e6b448"/><circle cx="7.5" cy="187" r="1.9" fill="#e6b448"/><circle cx="7.5" cy="196" r="1.9" fill="#e6b448"/><circle cx="7.5" cy="205" r="1.9" fill="#e6b448"/><circle cx="7.5" cy="214" r="1.9" fill="#e6b448"/><circle cx="7.5" cy="223" r="1.9" fill="#e6b448"/><circle cx="7.5" cy="232" r="1.9" fill="#e6b448"/><circle cx="7.5" cy="241" r="1.9" fill="#e6b448"/><circle cx="7.5" cy="250" r="1.9" fill="#e6b448"/><circle cx="7.5" cy="259" r="1.9" fill="#e6b448"/><circle cx="7.5" cy="268" r="1.9" fill="#e6b448"/></svg>
<div class="ab" style="left:0;top:0;width:277px;height:479px;overflow:hidden">
<svg style="left:65px;top:144px" width="16" height="13"><path d="M4.5 2.5Q4.5 0.5 7 0.5H9Q11.5 0.5 11.5 2.5" fill="#f8d8c8" stroke="#d08870" stroke-width="0.9"/><path d="M0.5 2.5H14.5L13.5 4V12.5H2V4Z" fill="#8ab4f0" stroke="#2a50b0"/><path d="M2.5 4.5H12.5V11.5H2.5Z" fill="#a8c8f8"/><path d="M0.5 2.5H14.5" stroke="#2a50b0"/></svg>
<div class="t" style="left:83px;top:138px;letter-spacing:0.2px">BankAccountReader</div>
<svg style="left:65px;top:167px" width="16" height="13"><path d="M4.5 2.5Q4.5 0.5 7 0.5H9Q11.5 0.5 11.5 2.5" fill="#f8d8c8" stroke="#d08870" stroke-width="0.9"/><path d="M0.5 2.5H14.5L13.5 4V12.5H2V4Z" fill="#8ab4f0" stroke="#2a50b0"/><path d="M2.5 4.5H12.5V11.5H2.5Z" fill="#a8c8f8"/><path d="M0.5 2.5H14.5" stroke="#2a50b0"/></svg>
<div class="t" style="left:83px;top:161px;letter-spacing:0.38px">ColorClassification</div>
<svg style="left:65px;top:190px" width="16" height="13"><path d="M4.5 2.5Q4.5 0.5 7 0.5H9Q11.5 0.5 11.5 2.5" fill="#f8d8c8" stroke="#d08870" stroke-width="0.9"/><path d="M0.5 2.5H14.5L13.5 4V12.5H2V4Z" fill="#8ab4f0" stroke="#2a50b0"/><path d="M2.5 4.5H12.5V11.5H2.5Z" fill="#a8c8f8"/><path d="M0.5 2.5H14.5" stroke="#2a50b0"/></svg>
<div class="t" style="left:83px;top:184px;letter-spacing:0.38px">DoublyLinkedCyclicList</div>
<svg style="left:65px;top:213px" width="16" height="13"><path d="M4.5 2.5Q4.5 0.5 7 0.5H9Q11.5 0.5 11.5 2.5" fill="#f8d8c8" stroke="#d08870" stroke-width="0.9"/><path d="M0.5 2.5H14.5L13.5 4V12.5H2V4Z" fill="#8ab4f0" stroke="#2a50b0"/><path d="M2.5 4.5H12.5V11.5H2.5Z" fill="#a8c8f8"/><path d="M0.5 2.5H14.5" stroke="#2a50b0"/></svg>
<div class="t" style="left:83px;top:207px;letter-spacing:0.05px">Euro-Test</div>
<svg style="left:65px;top:236px" width="16" height="13"><path d="M4.5 2.5Q4.5 0.5 7 0.5H9Q11.5 0.5 11.5 2.5" fill="#f8d8c8" stroke="#d08870" stroke-width="0.9"/><path d="M0.5 2.5H14.5L13.5 4V12.5H2V4Z" fill="#8ab4f0" stroke="#2a50b0"/><path d="M2.5 4.5H12.5V11.5H2.5Z" fill="#a8c8f8"/><path d="M0.5 2.5H14.5" stroke="#2a50b0"/></svg>
<div class="t" style="left:83px;top:230px;letter-spacing:0.7px">Hanoi</div>
<div class="ab" style="left:44px;top:322px;width:233px;height:23px;background:linear-gradient(#f3e9d2,#eadcb6 55%,#dbc792)"></div>
<div class="ab" style="left:44px;top:322px;width:233px;height:1px;background:#e8dcc0"></div>
<svg style="left:46px;top:258px" width="13" height="13"><defs><linearGradient id="ex" x1="0" y1="0" x2="0" y2="1"><stop offset="0" stop-color="#fffdf8"/><stop offset="1" stop-color="#e8dcc0"/></linearGradient></defs><rect x="0.5" y="0.5" width="12" height="12" rx="2" fill="url(#ex)" stroke="#cdbb8c"/><path d="M3 6.5H10" stroke="#111" stroke-width="1.3"/></svg>
<svg style="left:64px;top:257px" width="17" height="16" shape-rendering="crispEdges"><rect x="14" y="0" width="1" height="1" fill="#2a5ea8"/><rect x="14" y="1" width="1" height="1" fill="#2a5ea8"/><rect x="4" y="2" width="4" height="1" fill="#d8b880"/><rect x="14" y="2" width="1" height="1" fill="#2a5ea8"/><rect x="3" y="3" width="1" height="1" fill="#d8b880"/><rect x="8" y="3" width="1" height="1" fill="#d8b880"/><rect x="14" y="3" width="1" height="1" fill="#2a5ea8"/><rect x="0" y="4" width="10" height="1" fill="#8a7088"/><rect x="11" y="4" width="1" height="1" fill="#2a5ea8"/><rect x="14" y="4" width="1" height="1" fill="#2a5ea8"/><rect x="1" y="5" width="1" height="1" fill="#3a4ab8"/><rect x="2" y="5" width="8" height="1" fill="#f8e4a8"/><rect x="11" y="5" width="4" height="1" fill="#2a5ea8"/><rect x="1" y="6" width="1" height="1" fill="#3a4ab8"/><rect x="2" y="6" width="9" height="1" fill="#f8e4a8"/><rect x="12" y="6" width="2" height="1" fill="#2a5ea8"/><rect x="1" y="7" width="1" height="1" fill="#3a4ab8"/><rect x="2" y="7" width="10" height="1" fill="#f8e4a8"/><rect x="1" y="8" width="1" height="1" fill="#3a4ab8"/><rect x="2" y="8" width="2" height="1" fill="#f8e4a8"/><rect x="4" y="8" width="13" height="1" fill="#2a3aa8"/><rect x="1" y="9" width="1" height="1" fill="#3a4ab8"/><rect x="2" y="9" width="1" height="1" fill="#f8e4a8"/><rect x="3" y="9" width="1" height="1" fill="#2a3aa8"/><rect x="4" y="9" width="6" height="1" fill="#a8ccf4"/><rect x="10" y="9" width="5" height="1" fill="#d88a08"/><rect x="15" y="9" width="1" height="1" fill="#2a3aa8"/><rect x="1" y="10" width="1" height="1" fill="#3a4ab8"/><rect x="2" y="10" width="1" height="1" fill="#2a3aa8"/><rect x="3" y="10" width="7" height="1" fill="#a8ccf4"/><rect x="10" y="10" width="1" height="1" fill="#d88a08"/><rect x="11" y="10" width="2" height="1" fill="#f8e4a8"/><rect x="13" y="10" width="1" height="1" fill="#fff0b0"/><rect x="14" y="10" width="1" height="1" fill="#d88a08"/><rect x="1" y="11" width="1" height="1" fill="#3a4ab8"/><rect x="2" y="11" width="8" height="1" fill="#a8ccf4"/><rect x="10" y="11" width="1" height="1" fill="#d88a08"/><rect x="11" y="11" width="2" height="1" fill="#f8e4a8"/><rect x="13" y="11" width="1" height="1" fill="#fff0b0"/><rect x="14" y="11" width="1" height="1" fill="#d88a08"/><rect x="1" y="12" width="1" height="1" fill="#3a4ab8"/><rect x="2" y="12" width="8" height="1" fill="#a8ccf4"/><rect x="10" y="12" width="1" height="1" fill="#d88a08"/><rect x="11" y="12" width="2" height="1" fill="#f8e4a8"/><rect x="13" y="12" width="1" height="1" fill="#fff0b0"/><rect x="14" y="12" width="1" height="1" fill="#d88a08"/><rect x="2" y="13" width="7" height="1" fill="#2a3aa8"/><rect x="10" y="13" width="1" height="1" fill="#d88a08"/><rect x="11" y="13" width="2" height="1" fill="#f8e4a8"/><rect x="13" y="13" width="1" height="1" fill="#fff0b0"/><rect x="14" y="13" width="1" height="1" fill="#d88a08"/><rect x="10" y="14" width="1" height="1" fill="#d88a08"/><rect x="11" y="14" width="3" height="1" fill="#f8e4a8"/><rect x="14" y="14" width="1" height="1" fill="#d88a08"/><rect x="10" y="15" width="5" height="1" fill="#d88a08"/></svg>
<div class="t dim" style="left:84px;top:253px">&gt;</div>
<div class="t" style="left:98px;top:253px;letter-spacing:0px">IpdFs</div>
<div class="t dim" style="left:137px;top:253px">44 [https://svnserver.i</div>
<svg style="left:64px;top:281px" width="13" height="13"><defs><linearGradient id="ex" x1="0" y1="0" x2="0" y2="1"><stop offset="0" stop-color="#fffdf8"/><stop offset="1" stop-color="#e8dcc0"/></linearGradient></defs><rect x="0.5" y="0.5" width="12" height="12" rx="2" fill="url(#ex)" stroke="#cdbb8c"/><path d="M3 6.5H10" stroke="#111" stroke-width="1.3"/></svg>
<svg style="left:82px;top:282px" width="17" height="13" shape-rendering="crispEdges"><rect x="11" y="0" width="1" height="1" fill="#5a3818"/><rect x="3" y="1" width="3" height="1" fill="#b87820"/><rect x="8" y="1" width="7" height="1" fill="#a05a20"/><rect x="2" y="2" width="1" height="1" fill="#b87820"/><rect x="6" y="2" width="1" height="1" fill="#b87820"/><rect x="8" y="2" width="1" height="1" fill="#a05a20"/><rect x="9" y="2" width="2" height="1" fill="#f8dca0"/><rect x="11" y="2" width="1" height="1" fill="#5a3818"/><rect x="12" y="2" width="2" height="1" fill="#f8dca0"/><rect x="14" y="2" width="1" height="1" fill="#a05a20"/><rect x="1" y="3" width="1" height="1" fill="#b87820"/><rect x="2" y="3" width="5" height="1" fill="#f8dca0"/><rect x="7" y="3" width="1" height="1" fill="#b87820"/><rect x="8" y="3" width="1" height="1" fill="#a05a20"/><rect x="9" y="3" width="2" height="1" fill="#f8dca0"/><rect x="11" y="3" width="1" height="1" fill="#5a3818"/><rect x="12" y="3" width="2" height="1" fill="#f8dca0"/><rect x="14" y="3" width="1" height="1" fill="#a05a20"/><rect x="1" y="4" width="1" height="1" fill="#b87820"/><rect x="2" y="4" width="5" height="1" fill="#f8dca0"/><rect x="7" y="4" width="9" height="1" fill="#5a3818"/><rect x="1" y="5" width="1" height="1" fill="#b87820"/><rect x="2" y="5" width="6" height="1" fill="#f8dca0"/><rect x="8" y="5" width="1" height="1" fill="#a05a20"/><rect x="9" y="5" width="2" height="1" fill="#f8dca0"/><rect x="11" y="5" width="1" height="1" fill="#5a3818"/><rect x="12" y="5" width="2" height="1" fill="#f8dca0"/><rect x="14" y="5" width="1" height="1" fill="#a05a20"/><rect x="1" y="6" width="1" height="1" fill="#b87820"/><rect x="2" y="6" width="5" height="1" fill="#f8dca0"/><rect x="7" y="6" width="1" height="1" fill="#b87820"/><rect x="8" y="6" width="2" height="1" fill="#a05a20"/><rect x="10" y="6" width="5" height="1" fill="#d88a08"/><rect x="15" y="6" width="1" height="1" fill="#a05a20"/><rect x="1" y="7" width="1" height="1" fill="#b87820"/><rect x="2" y="7" width="4" height="1" fill="#f8dca0"/><rect x="6" y="7" width="1" height="1" fill="#b87820"/><rect x="10" y="7" width="1" height="1" fill="#d88a08"/><rect x="11" y="7" width="2" height="1" fill="#f8dca0"/><rect x="13" y="7" width="1" height="1" fill="#fff0b0"/><rect x="14" y="7" width="1" height="1" fill="#d88a08"/><rect x="1" y="8" width="1" height="1" fill="#b87820"/><rect x="2" y="8" width="3" height="1" fill="#f8dca0"/><rect x="5" y="8" width="1" height="1" fill="#b87820"/><rect x="10" y="8" width="1" height="1" fill="#d88a08"/><rect x="11" y="8" width="2" height="1" fill="#f8dca0"/><rect x="13" y="8" width="1" height="1" fill="#fff0b0"/><rect x="14" y="8" width="1" height="1" fill="#d88a08"/><rect x="1" y="9" width="1" height="1" fill="#b87820"/><rect x="2" y="9" width="2" height="1" fill="#f8dca0"/><rect x="4" y="9" width="1" height="1" fill="#b87820"/><rect x="10" y="9" width="1" height="1" fill="#d88a08"/><rect x="11" y="9" width="2" height="1" fill="#f8dca0"/><rect x="13" y="9" width="1" height="1" fill="#fff0b0"/><rect x="14" y="9" width="1" height="1" fill="#d88a08"/><rect x="1" y="10" width="1" height="1" fill="#b87820"/><rect x="2" y="10" width="1" height="1" fill="#f8dca0"/><rect x="3" y="10" width="1" height="1" fill="#b87820"/><rect x="10" y="10" width="1" height="1" fill="#d88a08"/><rect x="11" y="10" width="2" height="1" fill="#f8dca0"/><rect x="13" y="10" width="1" height="1" fill="#fff0b0"/><rect x="14" y="10" width="1" height="1" fill="#d88a08"/><rect x="2" y="11" width="7" height="1" fill="#b87820"/><rect x="10" y="11" width="1" height="1" fill="#d88a08"/><rect x="11" y="11" width="3" height="1" fill="#f8dca0"/><rect x="14" y="11" width="1" height="1" fill="#d88a08"/><rect x="10" y="12" width="5" height="1" fill="#d88a08"/></svg>
<div class="t dim" style="left:102px;top:276px">&gt;</div>
<div class="t" style="left:116px;top:276px;letter-spacing:0.9px">src</div>
<div class="t dim" style="left:139px;top:276px">45</div>
<svg style="left:82px;top:304px" width="13" height="13"><defs><linearGradient id="ex" x1="0" y1="0" x2="0" y2="1"><stop offset="0" stop-color="#fffdf8"/><stop offset="1" stop-color="#e8dcc0"/></linearGradient></defs><rect x="0.5" y="0.5" width="12" height="12" rx="2" fill="url(#ex)" stroke="#cdbb8c"/><path d="M3 6.5H10" stroke="#111" stroke-width="1.3"/></svg>
<svg style="left:102px;top:305px" width="14" height="14" shape-rendering="crispEdges"><rect x="6" y="0" width="1" height="1" fill="#7a4a28"/><rect x="1" y="1" width="5" height="1" fill="#c07a30"/><rect x="6" y="1" width="1" height="1" fill="#7a4a28"/><rect x="7" y="1" width="5" height="1" fill="#c07a30"/><rect x="1" y="2" width="1" height="1" fill="#c07a30"/><rect x="2" y="2" width="4" height="1" fill="#f6dcb8"/><rect x="6" y="2" width="1" height="1" fill="#7a4a28"/><rect x="7" y="2" width="4" height="1" fill="#f6dcb8"/><rect x="11" y="2" width="1" height="1" fill="#c07a30"/><rect x="1" y="3" width="1" height="1" fill="#c07a30"/><rect x="2" y="3" width="4" height="1" fill="#f6dcb8"/><rect x="6" y="3" width="1" height="1" fill="#7a4a28"/><rect x="7" y="3" width="4" height="1" fill="#f6dcb8"/><rect x="11" y="3" width="1" height="1" fill="#c07a30"/><rect x="1" y="4" width="1" height="1" fill="#c07a30"/><rect x="2" y="4" width="4" height="1" fill="#f6dcb8"/><rect x="6" y="4" width="1" height="1" fill="#7a4a28"/><rect x="7" y="4" width="4" height="1" fill="#f6dcb8"/><rect x="11" y="4" width="1" height="1" fill="#c07a30"/><rect x="1" y="5" width="1" height="1" fill="#c07a30"/><rect x="2" y="5" width="4" height="1" fill="#f6dcb8"/><rect x="6" y="5" width="1" height="1" fill="#7a4a28"/><rect x="7" y="5" width="4" height="1" fill="#f6dcb8"/><rect x="11" y="5" width="1" height="1" fill="#c07a30"/><rect x="0" y="6" width="8" height="1" fill="#7a4a28"/><rect x="8" y="6" width="4" height="1" fill="#c07a30"/><rect x="1" y="7" width="1" height="1" fill="#c07a30"/><rect x="2" y="7" width="4" height="1" fill="#f6dcb8"/><rect x="6" y="7" width="1" height="1" fill="#7a4a28"/><rect x="8" y="7" width="3" height="1" fill="#2a48a0"/><rect x="1" y="8" width="1" height="1" fill="#c07a30"/><rect x="2" y="8" width="4" height="1" fill="#f6dcb8"/><rect x="6" y="8" width="1" height="1" fill="#7a4a28"/><rect x="7" y="8" width="1" height="1" fill="#2a48a0"/><rect x="8" y="8" width="3" height="1" fill="#eef4ff"/><rect x="11" y="8" width="1" height="1" fill="#2a48a0"/><rect x="1" y="9" width="1" height="1" fill="#c07a30"/><rect x="2" y="9" width="4" height="1" fill="#f6dcb8"/><rect x="6" y="9" width="1" height="1" fill="#2a48a0"/><rect x="7" y="9" width="1" height="1" fill="#eef4ff"/><rect x="8" y="9" width="1" height="1" fill="#1a2a80"/><rect x="9" y="9" width="3" height="1" fill="#eef4ff"/><rect x="12" y="9" width="1" height="1" fill="#2a48a0"/><rect x="1" y="10" width="1" height="1" fill="#c07a30"/><rect x="2" y="10" width="4" height="1" fill="#f6dcb8"/><rect x="6" y="10" width="1" height="1" fill="#2a48a0"/><rect x="7" y="10" width="1" height="1" fill="#eef4ff"/><rect x="8" y="10" width="1" height="1" fill="#1a2a80"/><rect x="9" y="10" width="3" height="1" fill="#eef4ff"/><rect x="12" y="10" width="1" height="1" fill="#2a48a0"/><rect x="1" y="11" width="5" height="1" fill="#c07a30"/><rect x="6" y="11" width="1" height="1" fill="#2a48a0"/><rect x="7" y="11" width="1" height="1" fill="#eef4ff"/><rect x="8" y="11" width="2" height="1" fill="#1a2a80"/><rect x="10" y="11" width="2" height="1" fill="#eef4ff"/><rect x="12" y="11" width="1" height="1" fill="#2a48a0"/><rect x="7" y="12" width="1" height="1" fill="#2a48a0"/><rect x="8" y="12" width="3" height="1" fill="#eef4ff"/><rect x="11" y="12" width="1" height="1" fill="#2a48a0"/><rect x="8" y="13" width="3" height="1" fill="#2a48a0"/></svg>
<div class="t dim" style="left:120px;top:299px">&gt;</div>
<div class="t" style="left:134px;top:299px;letter-spacing:0.65px">edu.kit.filesystem</div>
<svg style="left:100px;top:327px" width="13" height="13"><defs><linearGradient id="ex" x1="0" y1="0" x2="0" y2="1"><stop offset="0" stop-color="#fffdf8"/><stop offset="1" stop-color="#e8dcc0"/></linearGradient></defs><rect x="0.5" y="0.5" width="12" height="12" rx="2" fill="url(#ex)" stroke="#cdbb8c"/><path d="M3 6.5H10" stroke="#111" stroke-width="1.3"/><path d="M6.5 3V10" stroke="#111" stroke-width="1.3"/></svg>
<svg style="left:121px;top:327px" width="12" height="15" shape-rendering="crispEdges"><rect x="0" y="0" width="7" height="1" fill="#9a7a38"/><rect x="7" y="0" width="1" height="1" fill="#e6c97e"/><rect x="0" y="1" width="1" height="1" fill="#9a7a38"/><rect x="1" y="1" width="5" height="1" fill="#fff0b0"/><rect x="6" y="1" width="1" height="1" fill="#9a7a38"/><rect x="7" y="1" width="2" height="1" fill="#e6c97e"/><rect x="0" y="2" width="1" height="1" fill="#9a7a38"/><rect x="1" y="2" width="5" height="1" fill="#fff0b0"/><rect x="6" y="2" width="1" height="1" fill="#9a7a38"/><rect x="7" y="2" width="3" height="1" fill="#e6c97e"/><rect x="0" y="3" width="1" height="1" fill="#9a7a38"/><rect x="1" y="3" width="4" height="1" fill="#fff0b0"/><rect x="5" y="3" width="2" height="1" fill="#2d62a6"/><rect x="7" y="3" width="4" height="1" fill="#9a7a38"/><rect x="0" y="4" width="1" height="1" fill="#9a7a38"/><rect x="1" y="4" width="4" height="1" fill="#fff0b0"/><rect x="5" y="4" width="2" height="1" fill="#2d62a6"/><rect x="7" y="4" width="3" height="1" fill="#fff0b0"/><rect x="10" y="4" width="1" height="1" fill="#9a7a38"/><rect x="0" y="5" width="1" height="1" fill="#9a7a38"/><rect x="1" y="5" width="4" height="1" fill="#fff0b0"/><rect x="5" y="5" width="2" height="1" fill="#2d62a6"/><rect x="7" y="5" width="3" height="1" fill="#fff0b0"/><rect x="10" y="5" width="1" height="1" fill="#9a7a38"/><rect x="0" y="6" width="1" height="1" fill="#9a7a38"/><rect x="1" y="6" width="4" height="1" fill="#fff0b0"/><rect x="5" y="6" width="2" height="1" fill="#2d62a6"/><rect x="7" y="6" width="3" height="1" fill="#fff0b0"/><rect x="10" y="6" width="1" height="1" fill="#9a7a38"/><rect x="0" y="7" width="1" height="1" fill="#9a7a38"/><rect x="1" y="7" width="4" height="1" fill="#fff0b0"/><rect x="5" y="7" width="2" height="1" fill="#2d62a6"/><rect x="7" y="7" width="3" height="1" fill="#fff0b0"/><rect x="10" y="7" width="1" height="1" fill="#9a7a38"/><rect x="0" y="8" width="1" height="1" fill="#9a7a38"/><rect x="1" y="8" width="4" height="1" fill="#fff0b0"/><rect x="5" y="8" width="2" height="1" fill="#2d62a6"/><rect x="7" y="8" width="5" height="1" fill="#d98a08"/><rect x="0" y="9" width="1" height="1" fill="#9a7a38"/><rect x="1" y="9" width="1" height="1" fill="#fff0b0"/><rect x="2" y="9" width="1" height="1" fill="#2d62a6"/><rect x="3" y="9" width="2" height="1" fill="#fff0b0"/><rect x="5" y="9" width="2" height="1" fill="#2d62a6"/><rect x="7" y="9" width="1" height="1" fill="#d98a08"/><rect x="8" y="9" width="2" height="1" fill="#f8c030"/><rect x="10" y="9" width="1" height="1" fill="#fff0b0"/><rect x="11" y="9" width="1" height="1" fill="#d98a08"/><rect x="0" y="10" width="1" height="1" fill="#9a7a38"/><rect x="1" y="10" width="1" height="1" fill="#fff0b0"/><rect x="2" y="10" width="4" height="1" fill="#2d62a6"/><rect x="6" y="10" width="1" height="1" fill="#fff0b0"/><rect x="7" y="10" width="1" height="1" fill="#d98a08"/><rect x="8" y="10" width="2" height="1" fill="#f8c030"/><rect x="10" y="10" width="1" height="1" fill="#fff0b0"/><rect x="11" y="10" width="1" height="1" fill="#d98a08"/><rect x="0" y="11" width="1" height="1" fill="#9a7a38"/><rect x="1" y="11" width="2" height="1" fill="#fff0b0"/><rect x="3" y="11" width="2" height="1" fill="#2d62a6"/><rect x="5" y="11" width="2" height="1" fill="#fff0b0"/><rect x="7" y="11" width="1" height="1" fill="#d98a08"/><rect x="8" y="11" width="2" height="1" fill="#f8c030"/><rect x="10" y="11" width="1" height="1" fill="#fff0b0"/><rect x="11" y="11" width="1" height="1" fill="#d98a08"/><rect x="0" y="12" width="1" height="1" fill="#9a7a38"/><rect x="1" y="12" width="6" height="1" fill="#fff0b0"/><rect x="7" y="12" width="1" height="1" fill="#d98a08"/><rect x="8" y="12" width="2" height="1" fill="#f8c030"/><rect x="10" y="12" width="1" height="1" fill="#fff0b0"/><rect x="11" y="12" width="1" height="1" fill="#d98a08"/><rect x="0" y="13" width="7" height="1" fill="#9a7a38"/><rect x="7" y="13" width="1" height="1" fill="#d98a08"/><rect x="8" y="13" width="3" height="1" fill="#f8c030"/><rect x="11" y="13" width="1" height="1" fill="#d98a08"/><rect x="7" y="14" width="5" height="1" fill="#d98a08"/></svg>
<div class="t" style="left:138px;top:322px">&gt;</div>
<div class="t" style="left:151px;top:322px;letter-spacing:0.5px">Computer.java</div>
<div class="t" style="left:251px;top:322px">59</div>
<svg style="left:100px;top:350px" width="13" height="13"><defs><linearGradient id="ex" x1="0" y1="0" x2="0" y2="1"><stop offset="0" stop-color="#fffdf8"/><stop offset="1" stop-color="#e8dcc0"/></linearGradient></defs><rect x="0.5" y="0.5" width="12" height="12" rx="2" fill="url(#ex)" stroke="#cdbb8c"/><path d="M3 6.5H10" stroke="#111" stroke-width="1.3"/><path d="M6.5 3V10" stroke="#111" stroke-width="1.3"/></svg>
<svg style="left:121px;top:350px" width="12" height="15" shape-rendering="crispEdges"><rect x="0" y="0" width="7" height="1" fill="#9a7a38"/><rect x="7" y="0" width="1" height="1" fill="#e6c97e"/><rect x="0" y="1" width="1" height="1" fill="#9a7a38"/><rect x="1" y="1" width="5" height="1" fill="#fff0b0"/><rect x="6" y="1" width="1" height="1" fill="#9a7a38"/><rect x="7" y="1" width="2" height="1" fill="#e6c97e"/><rect x="0" y="2" width="1" height="1" fill="#9a7a38"/><rect x="1" y="2" width="5" height="1" fill="#fff0b0"/><rect x="6" y="2" width="1" height="1" fill="#9a7a38"/><rect x="7" y="2" width="3" height="1" fill="#e6c97e"/><rect x="0" y="3" width="1" height="1" fill="#9a7a38"/><rect x="1" y="3" width="4" height="1" fill="#fff0b0"/><rect x="5" y="3" width="2" height="1" fill="#2d62a6"/><rect x="7" y="3" width="4" height="1" fill="#9a7a38"/><rect x="0" y="4" width="1" height="1" fill="#9a7a38"/><rect x="1" y="4" width="4" height="1" fill="#fff0b0"/><rect x="5" y="4" width="2" height="1" fill="#2d62a6"/><rect x="7" y="4" width="3" height="1" fill="#fff0b0"/><rect x="10" y="4" width="1" height="1" fill="#9a7a38"/><rect x="0" y="5" width="1" height="1" fill="#9a7a38"/><rect x="1" y="5" width="4" height="1" fill="#fff0b0"/><rect x="5" y="5" width="2" height="1" fill="#2d62a6"/><rect x="7" y="5" width="3" height="1" fill="#fff0b0"/><rect x="10" y="5" width="1" height="1" fill="#9a7a38"/><rect x="0" y="6" width="1" height="1" fill="#9a7a38"/><rect x="1" y="6" width="4" height="1" fill="#fff0b0"/><rect x="5" y="6" width="2" height="1" fill="#2d62a6"/><rect x="7" y="6" width="3" height="1" fill="#fff0b0"/><rect x="10" y="6" width="1" height="1" fill="#9a7a38"/><rect x="0" y="7" width="1" height="1" fill="#9a7a38"/><rect x="1" y="7" width="4" height="1" fill="#fff0b0"/><rect x="5" y="7" width="2" height="1" fill="#2d62a6"/><rect x="7" y="7" width="3" height="1" fill="#fff0b0"/><rect x="10" y="7" width="1" height="1" fill="#9a7a38"/><rect x="0" y="8" width="1" height="1" fill="#9a7a38"/><rect x="1" y="8" width="4" height="1" fill="#fff0b0"/><rect x="5" y="8" width="2" height="1" fill="#2d62a6"/><rect x="7" y="8" width="5" height="1" fill="#d98a08"/><rect x="0" y="9" width="1" height="1" fill="#9a7a38"/><rect x="1" y="9" width="1" height="1" fill="#fff0b0"/><rect x="2" y="9" width="1" height="1" fill="#2d62a6"/><rect x="3" y="9" width="2" height="1" fill="#fff0b0"/><rect x="5" y="9" width="2" height="1" fill="#2d62a6"/><rect x="7" y="9" width="1" height="1" fill="#d98a08"/><rect x="8" y="9" width="2" height="1" fill="#f8c030"/><rect x="10" y="9" width="1" height="1" fill="#fff0b0"/><rect x="11" y="9" width="1" height="1" fill="#d98a08"/><rect x="0" y="10" width="1" height="1" fill="#9a7a38"/><rect x="1" y="10" width="1" height="1" fill="#fff0b0"/><rect x="2" y="10" width="4" height="1" fill="#2d62a6"/><rect x="6" y="10" width="1" height="1" fill="#fff0b0"/><rect x="7" y="10" width="1" height="1" fill="#d98a08"/><rect x="8" y="10" width="2" height="1" fill="#f8c030"/><rect x="10" y="10" width="1" height="1" fill="#fff0b0"/><rect x="11" y="10" width="1" height="1" fill="#d98a08"/><rect x="0" y="11" width="1" height="1" fill="#9a7a38"/><rect x="1" y="11" width="2" height="1" fill="#fff0b0"/><rect x="3" y="11" width="2" height="1" fill="#2d62a6"/><rect x="5" y="11" width="2" height="1" fill="#fff0b0"/><rect x="7" y="11" width="1" height="1" fill="#d98a08"/><rect x="8" y="11" width="2" height="1" fill="#f8c030"/><rect x="10" y="11" width="1" height="1" fill="#fff0b0"/><rect x="11" y="11" width="1" height="1" fill="#d98a08"/><rect x="0" y="12" width="1" height="1" fill="#9a7a38"/><rect x="1" y="12" width="6" height="1" fill="#fff0b0"/><rect x="7" y="12" width="1" height="1" fill="#d98a08"/><rect x="8" y="12" width="2" height="1" fill="#f8c030"/><rect x="10" y="12" width="1" height="1" fill="#fff0b0"/><rect x="11" y="12" width="1" height="1" fill="#d98a08"/><rect x="0" y="13" width="7" height="1" fill="#9a7a38"/><rect x="7" y="13" width="1" height="1" fill="#d98a08"/><rect x="8" y="13" width="3" height="1" fill="#f8c030"/><rect x="11" y="13" width="1" height="1" fill="#d98a08"/><rect x="7" y="14" width="5" height="1" fill="#d98a08"/></svg>
<div class="t dim" style="left:138px;top:345px">&gt;</div>
<div class="t" style="left:151px;top:345px;letter-spacing:0.5px">Directory.java</div>
<div class="t dim" style="left:246px;top:345px">59</div>
<svg style="left:100px;top:373px" width="13" height="13"><defs><linearGradient id="ex" x1="0" y1="0" x2="0" y2="1"><stop offset="0" stop-color="#fffdf8"/><stop offset="1" stop-color="#e8dcc0"/></linearGradient></defs><rect x="0.5" y="0.5" width="12" height="12" rx="2" fill="url(#ex)" stroke="#cdbb8c"/><path d="M3 6.5H10" stroke="#111" stroke-width="1.3"/><path d="M6.5 3V10" stroke="#111" stroke-width="1.3"/></svg>
<svg style="left:121px;top:373px" width="12" height="15" shape-rendering="crispEdges"><rect x="0" y="0" width="7" height="1" fill="#9a7a38"/><rect x="7" y="0" width="1" height="1" fill="#e6c97e"/><rect x="0" y="1" width="1" height="1" fill="#9a7a38"/><rect x="1" y="1" width="5" height="1" fill="#fff0b0"/><rect x="6" y="1" width="1" height="1" fill="#9a7a38"/><rect x="7" y="1" width="2" height="1" fill="#e6c97e"/><rect x="0" y="2" width="1" height="1" fill="#9a7a38"/><rect x="1" y="2" width="5" height="1" fill="#fff0b0"/><rect x="6" y="2" width="1" height="1" fill="#9a7a38"/><rect x="7" y="2" width="3" height="1" fill="#e6c97e"/><rect x="0" y="3" width="1" height="1" fill="#9a7a38"/><rect x="1" y="3" width="4" height="1" fill="#fff0b0"/><rect x="5" y="3" width="2" height="1" fill="#2d62a6"/><rect x="7" y="3" width="4" height="1" fill="#9a7a38"/><rect x="0" y="4" width="1" height="1" fill="#9a7a38"/><rect x="1" y="4" width="4" height="1" fill="#fff0b0"/><rect x="5" y="4" width="2" height="1" fill="#2d62a6"/><rect x="7" y="4" width="3" height="1" fill="#fff0b0"/><rect x="10" y="4" width="1" height="1" fill="#9a7a38"/><rect x="0" y="5" width="1" height="1" fill="#9a7a38"/><rect x="1" y="5" width="4" height="1" fill="#fff0b0"/><rect x="5" y="5" width="2" height="1" fill="#2d62a6"/><rect x="7" y="5" width="3" height="1" fill="#fff0b0"/><rect x="10" y="5" width="1" height="1" fill="#9a7a38"/><rect x="0" y="6" width="1" height="1" fill="#9a7a38"/><rect x="1" y="6" width="4" height="1" fill="#fff0b0"/><rect x="5" y="6" width="2" height="1" fill="#2d62a6"/><rect x="7" y="6" width="3" height="1" fill="#fff0b0"/><rect x="10" y="6" width="1" height="1" fill="#9a7a38"/><rect x="0" y="7" width="1" height="1" fill="#9a7a38"/><rect x="1" y="7" width="4" height="1" fill="#fff0b0"/><rect x="5" y="7" width="2" height="1" fill="#2d62a6"/><rect x="7" y="7" width="3" height="1" fill="#fff0b0"/><rect x="10" y="7" width="1" height="1" fill="#9a7a38"/><rect x="0" y="8" width="1" height="1" fill="#9a7a38"/><rect x="1" y="8" width="4" height="1" fill="#fff0b0"/><rect x="5" y="8" width="2" height="1" fill="#2d62a6"/><rect x="7" y="8" width="5" height="1" fill="#d98a08"/><rect x="0" y="9" width="1" height="1" fill="#9a7a38"/><rect x="1" y="9" width="1" height="1" fill="#fff0b0"/><rect x="2" y="9" width="1" height="1" fill="#2d62a6"/><rect x="3" y="9" width="2" height="1" fill="#fff0b0"/><rect x="5" y="9" width="2" height="1" fill="#2d62a6"/><rect x="7" y="9" width="1" height="1" fill="#d98a08"/><rect x="8" y="9" width="2" height="1" fill="#f8c030"/><rect x="10" y="9" width="1" height="1" fill="#fff0b0"/><rect x="11" y="9" width="1" height="1" fill="#d98a08"/><rect x="0" y="10" width="1" height="1" fill="#9a7a38"/><rect x="1" y="10" width="1" height="1" fill="#fff0b0"/><rect x="2" y="10" width="4" height="1" fill="#2d62a6"/><rect x="6" y="10" width="1" height="1" fill="#fff0b0"/><rect x="7" y="10" width="1" height="1" fill="#d98a08"/><rect x="8" y="10" width="2" height="1" fill="#f8c030"/><rect x="10" y="10" width="1" height="1" fill="#fff0b0"/><rect x="11" y="10" width="1" height="1" fill="#d98a08"/><rect x="0" y="11" width="1" height="1" fill="#9a7a38"/><rect x="1" y="11" width="2" height="1" fill="#fff0b0"/><rect x="3" y="11" width="2" height="1" fill="#2d62a6"/><rect x="5" y="11" width="2" height="1" fill="#fff0b0"/><rect x="7" y="11" width="1" height="1" fill="#d98a08"/><rect x="8" y="11" width="2" height="1" fill="#f8c030"/><rect x="10" y="11" width="1" height="1" fill="#fff0b0"/><rect x="11" y="11" width="1" height="1" fill="#d98a08"/><rect x="0" y="12" width="1" height="1" fill="#9a7a38"/><rect x="1" y="12" width="6" height="1" fill="#fff0b0"/><rect x="7" y="12" width="1" height="1" fill="#d98a08"/><rect x="8" y="12" width="2" height="1" fill="#f8c030"/><rect x="10" y="12" width="1" height="1" fill="#fff0b0"/><rect x="11" y="12" width="1" height="1" fill="#d98a08"/><rect x="0" y="13" width="7" height="1" fill="#9a7a38"/><rect x="7" y="13" width="1" height="1" fill="#d98a08"/><rect x="8" y="13" width="3" height="1" fill="#f8c030"/><rect x="11" y="13" width="1" height="1" fill="#d98a08"/><rect x="7" y="14" width="5" height="1" fill="#d98a08"/></svg>
<div class="t dim" style="left:138px;top:368px">&gt;</div>
<div class="t" style="left:151px;top:368px;letter-spacing:0.5px">File.java</div>
<div class="t dim" style="left:211px;top:368px">59</div>
<svg style="left:100px;top:396px" width="13" height="13"><defs><linearGradient id="ex" x1="0" y1="0" x2="0" y2="1"><stop offset="0" stop-color="#fffdf8"/><stop offset="1" stop-color="#e8dcc0"/></linearGradient></defs><rect x="0.5" y="0.5" width="12" height="12" rx="2" fill="url(#ex)" stroke="#cdbb8c"/><path d="M3 6.5H10" stroke="#111" stroke-width="1.3"/><path d="M6.5 3V10" stroke="#111" stroke-width="1.3"/></svg>
<svg style="left:121px;top:396px" width="12" height="15" shape-rendering="crispEdges"><rect x="0" y="0" width="7" height="1" fill="#9a7a38"/><rect x="7" y="0" width="1" height="1" fill="#e6c97e"/><rect x="0" y="1" width="1" height="1" fill="#9a7a38"/><rect x="1" y="1" width="5" height="1" fill="#fff0b0"/><rect x="6" y="1" width="1" height="1" fill="#9a7a38"/><rect x="7" y="1" width="2" height="1" fill="#e6c97e"/><rect x="0" y="2" width="1" height="1" fill="#9a7a38"/><rect x="1" y="2" width="5" height="1" fill="#fff0b0"/><rect x="6" y="2" width="1" height="1" fill="#9a7a38"/><rect x="7" y="2" width="3" height="1" fill="#e6c97e"/><rect x="0" y="3" width="1" height="1" fill="#9a7a38"/><rect x="1" y="3" width="4" height="1" fill="#fff0b0"/><rect x="5" y="3" width="2" height="1" fill="#2d62a6"/><rect x="7" y="3" width="4" height="1" fill="#9a7a38"/><rect x="0" y="4" width="1" height="1" fill="#9a7a38"/><rect x="1" y="4" width="4" height="1" fill="#fff0b0"/><rect x="5" y="4" width="2" height="1" fill="#2d62a6"/><rect x="7" y="4" width="3" height="1" fill="#fff0b0"/><rect x="10" y="4" width="1" height="1" fill="#9a7a38"/><rect x="0" y="5" width="1" height="1" fill="#9a7a38"/><rect x="1" y="5" width="4" height="1" fill="#fff0b0"/><rect x="5" y="5" width="2" height="1" fill="#2d62a6"/><rect x="7" y="5" width="3" height="1" fill="#fff0b0"/><rect x="10" y="5" width="1" height="1" fill="#9a7a38"/><rect x="0" y="6" width="1" height="1" fill="#9a7a38"/><rect x="1" y="6" width="4" height="1" fill="#fff0b0"/><rect x="5" y="6" width="2" height="1" fill="#2d62a6"/><rect x="7" y="6" width="3" height="1" fill="#fff0b0"/><rect x="10" y="6" width="1" height="1" fill="#9a7a38"/><rect x="0" y="7" width="1" height="1" fill="#9a7a38"/><rect x="1" y="7" width="4" height="1" fill="#fff0b0"/><rect x="5" y="7" width="2" height="1" fill="#2d62a6"/><rect x="7" y="7" width="3" height="1" fill="#fff0b0"/><rect x="10" y="7" width="1" height="1" fill="#9a7a38"/><rect x="0" y="8" width="1" height="1" fill="#9a7a38"/><rect x="1" y="8" width="4" height="1" fill="#fff0b0"/><rect x="5" y="8" width="2" height="1" fill="#2d62a6"/><rect x="7" y="8" width="5" height="1" fill="#d98a08"/><rect x="0" y="9" width="1" height="1" fill="#9a7a38"/><rect x="1" y="9" width="1" height="1" fill="#fff0b0"/><rect x="2" y="9" width="1" height="1" fill="#2d62a6"/><rect x="3" y="9" width="2" height="1" fill="#fff0b0"/><rect x="5" y="9" width="2" height="1" fill="#2d62a6"/><rect x="7" y="9" width="1" height="1" fill="#d98a08"/><rect x="8" y="9" width="2" height="1" fill="#f8c030"/><rect x="10" y="9" width="1" height="1" fill="#fff0b0"/><rect x="11" y="9" width="1" height="1" fill="#d98a08"/><rect x="0" y="10" width="1" height="1" fill="#9a7a38"/><rect x="1" y="10" width="1" height="1" fill="#fff0b0"/><rect x="2" y="10" width="4" height="1" fill="#2d62a6"/><rect x="6" y="10" width="1" height="1" fill="#fff0b0"/><rect x="7" y="10" width="1" height="1" fill="#d98a08"/><rect x="8" y="10" width="2" height="1" fill="#f8c030"/><rect x="10" y="10" width="1" height="1" fill="#fff0b0"/><rect x="11" y="10" width="1" height="1" fill="#d98a08"/><rect x="0" y="11" width="1" height="1" fill="#9a7a38"/><rect x="1" y="11" width="2" height="1" fill="#fff0b0"/><rect x="3" y="11" width="2" height="1" fill="#2d62a6"/><rect x="5" y="11" width="2" height="1" fill="#fff0b0"/><rect x="7" y="11" width="1" height="1" fill="#d98a08"/><rect x="8" y="11" width="2" height="1" fill="#f8c030"/><rect x="10" y="11" width="1" height="1" fill="#fff0b0"/><rect x="11" y="11" width="1" height="1" fill="#d98a08"/><rect x="0" y="12" width="1" height="1" fill="#9a7a38"/><rect x="1" y="12" width="6" height="1" fill="#fff0b0"/><rect x="7" y="12" width="1" height="1" fill="#d98a08"/><rect x="8" y="12" width="2" height="1" fill="#f8c030"/><rect x="10" y="12" width="1" height="1" fill="#fff0b0"/><rect x="11" y="12" width="1" height="1" fill="#d98a08"/><rect x="0" y="13" width="7" height="1" fill="#9a7a38"/><rect x="7" y="13" width="1" height="1" fill="#d98a08"/><rect x="8" y="13" width="3" height="1" fill="#f8c030"/><rect x="11" y="13" width="1" height="1" fill="#d98a08"/><rect x="7" y="14" width="5" height="1" fill="#d98a08"/></svg>
<div class="t dim" style="left:138px;top:391px">&gt;</div>
<div class="t" style="left:151px;top:391px;letter-spacing:0.5px">HDD.java</div>
<div class="t dim" style="left:218px;top:391px">59</div>
<svg style="left:100px;top:419px" width="13" height="13"><defs><linearGradient id="ex" x1="0" y1="0" x2="0" y2="1"><stop offset="0" stop-color="#fffdf8"/><stop offset="1" stop-color="#e8dcc0"/></linearGradient></defs><rect x="0.5" y="0.5" width="12" height="12" rx="2" fill="url(#ex)" stroke="#cdbb8c"/><path d="M3 6.5H10" stroke="#111" stroke-width="1.3"/><path d="M6.5 3V10" stroke="#111" stroke-width="1.3"/></svg>
<svg style="left:121px;top:419px" width="12" height="15" shape-rendering="crispEdges"><rect x="0" y="0" width="7" height="1" fill="#9a7a38"/><rect x="7" y="0" width="1" height="1" fill="#e6c97e"/><rect x="0" y="1" width="1" height="1" fill="#9a7a38"/><rect x="1" y="1" width="5" height="1" fill="#fff0b0"/><rect x="6" y="1" width="1" height="1" fill="#9a7a38"/><rect x="7" y="1" width="2" height="1" fill="#e6c97e"/><rect x="0" y="2" width="1" height="1" fill="#9a7a38"/><rect x="1" y="2" width="5" height="1" fill="#fff0b0"/><rect x="6" y="2" width="1" height="1" fill="#9a7a38"/><rect x="7" y="2" width="3" height="1" fill="#e6c97e"/><rect x="0" y="3" width="1" height="1" fill="#9a7a38"/><rect x="1" y="3" width="4" height="1" fill="#fff0b0"/><rect x="5" y="3" width="2" height="1" fill="#2d62a6"/><rect x="7" y="3" width="4" height="1" fill="#9a7a38"/><rect x="0" y="4" width="1" height="1" fill="#9a7a38"/><rect x="1" y="4" width="4" height="1" fill="#fff0b0"/><rect x="5" y="4" width="2" height="1" fill="#2d62a6"/><rect x="7" y="4" width="3" height="1" fill="#fff0b0"/><rect x="10" y="4" width="1" height="1" fill="#9a7a38"/><rect x="0" y="5" width="1" height="1" fill="#9a7a38"/><rect x="1" y="5" width="4" height="1" fill="#fff0b0"/><rect x="5" y="5" width="2" height="1" fill="#2d62a6"/><rect x="7" y="5" width="3" height="1" fill="#fff0b0"/><rect x="10" y="5" width="1" height="1" fill="#9a7a38"/><rect x="0" y="6" width="1" height="1" fill="#9a7a38"/><rect x="1" y="6" width="4" height="1" fill="#fff0b0"/><rect x="5" y="6" width="2" height="1" fill="#2d62a6"/><rect x="7" y="6" width="3" height="1" fill="#fff0b0"/><rect x="10" y="6" width="1" height="1" fill="#9a7a38"/><rect x="0" y="7" width="1" height="1" fill="#9a7a38"/><rect x="1" y="7" width="4" height="1" fill="#fff0b0"/><rect x="5" y="7" width="2" height="1" fill="#2d62a6"/><rect x="7" y="7" width="3" height="1" fill="#fff0b0"/><rect x="10" y="7" width="1" height="1" fill="#9a7a38"/><rect x="0" y="8" width="1" height="1" fill="#9a7a38"/><rect x="1" y="8" width="4" height="1" fill="#fff0b0"/><rect x="5" y="8" width="2" height="1" fill="#2d62a6"/><rect x="7" y="8" width="5" height="1" fill="#d98a08"/><rect x="0" y="9" width="1" height="1" fill="#9a7a38"/><rect x="1" y="9" width="1" height="1" fill="#fff0b0"/><rect x="2" y="9" width="1" height="1" fill="#2d62a6"/><rect x="3" y="9" width="2" height="1" fill="#fff0b0"/><rect x="5" y="9" width="2" height="1" fill="#2d62a6"/><rect x="7" y="9" width="1" height="1" fill="#d98a08"/><rect x="8" y="9" width="2" height="1" fill="#f8c030"/><rect x="10" y="9" width="1" height="1" fill="#fff0b0"/><rect x="11" y="9" width="1" height="1" fill="#d98a08"/><rect x="0" y="10" width="1" height="1" fill="#9a7a38"/><rect x="1" y="10" width="1" height="1" fill="#fff0b0"/><rect x="2" y="10" width="4" height="1" fill="#2d62a6"/><rect x="6" y="10" width="1" height="1" fill="#fff0b0"/><rect x="7" y="10" width="1" height="1" fill="#d98a08"/><rect x="8" y="10" width="2" height="1" fill="#f8c030"/><rect x="10" y="10" width="1" height="1" fill="#fff0b0"/><rect x="11" y="10" width="1" height="1" fill="#d98a08"/><rect x="0" y="11" width="1" height="1" fill="#9a7a38"/><rect x="1" y="11" width="2" height="1" fill="#fff0b0"/><rect x="3" y="11" width="2" height="1" fill="#2d62a6"/><rect x="5" y="11" width="2" height="1" fill="#fff0b0"/><rect x="7" y="11" width="1" height="1" fill="#d98a08"/><rect x="8" y="11" width="2" height="1" fill="#f8c030"/><rect x="10" y="11" width="1" height="1" fill="#fff0b0"/><rect x="11" y="11" width="1" height="1" fill="#d98a08"/><rect x="0" y="12" width="1" height="1" fill="#9a7a38"/><rect x="1" y="12" width="6" height="1" fill="#fff0b0"/><rect x="7" y="12" width="1" height="1" fill="#d98a08"/><rect x="8" y="12" width="2" height="1" fill="#f8c030"/><rect x="10" y="12" width="1" height="1" fill="#fff0b0"/><rect x="11" y="12" width="1" height="1" fill="#d98a08"/><rect x="0" y="13" width="7" height="1" fill="#9a7a38"/><rect x="7" y="13" width="1" height="1" fill="#d98a08"/><rect x="8" y="13" width="3" height="1" fill="#f8c030"/><rect x="11" y="13" width="1" height="1" fill="#d98a08"/><rect x="7" y="14" width="5" height="1" fill="#d98a08"/></svg>
<div class="t dim" style="left:138px;top:414px">&gt;</div>
<div class="t" style="left:151px;top:414px;letter-spacing:0.5px">Node.java</div>
<div class="t dim" style="left:222px;top:414px">59</div>
<svg style="left:100px;top:442px" width="13" height="13"><defs><linearGradient id="ex" x1="0" y1="0" x2="0" y2="1"><stop offset="0" stop-color="#fffdf8"/><stop offset="1" stop-color="#e8dcc0"/></linearGradient></defs><rect x="0.5" y="0.5" width="12" height="12" rx="2" fill="url(#ex)" stroke="#cdbb8c"/><path d="M3 6.5H10" stroke="#111" stroke-width="1.3"/><path d="M6.5 3V10" stroke="#111" stroke-width="1.3"/></svg>
<svg style="left:121px;top:442px" width="12" height="15" shape-rendering="crispEdges"><rect x="0" y="0" width="7" height="1" fill="#9a7a38"/><rect x="7" y="0" width="1" height="1" fill="#e6c97e"/><rect x="0" y="1" width="1" height="1" fill="#9a7a38"/><rect x="1" y="1" width="5" height="1" fill="#fff0b0"/><rect x="6" y="1" width="1" height="1" fill="#9a7a38"/><rect x="7" y="1" width="2" height="1" fill="#e6c97e"/><rect x="0" y="2" width="1" height="1" fill="#9a7a38"/><rect x="1" y="2" width="5" height="1" fill="#fff0b0"/><rect x="6" y="2" width="1" height="1" fill="#9a7a38"/><rect x="7" y="2" width="3" height="1" fill="#e6c97e"/><rect x="0" y="3" width="1" height="1" fill="#9a7a38"/><rect x="1" y="3" width="4" height="1" fill="#fff0b0"/><rect x="5" y="3" width="2" height="1" fill="#2d62a6"/><rect x="7" y="3" width="4" height="1" fill="#9a7a38"/><rect x="0" y="4" width="1" height="1" fill="#9a7a38"/><rect x="1" y="4" width="4" height="1" fill="#fff0b0"/><rect x="5" y="4" width="2" height="1" fill="#2d62a6"/><rect x="7" y="4" width="3" height="1" fill="#fff0b0"/><rect x="10" y="4" width="1" height="1" fill="#9a7a38"/><rect x="0" y="5" width="1" height="1" fill="#9a7a38"/><rect x="1" y="5" width="4" height="1" fill="#fff0b0"/><rect x="5" y="5" width="2" height="1" fill="#2d62a6"/><rect x="7" y="5" width="3" height="1" fill="#fff0b0"/><rect x="10" y="5" width="1" height="1" fill="#9a7a38"/><rect x="0" y="6" width="1" height="1" fill="#9a7a38"/><rect x="1" y="6" width="4" height="1" fill="#fff0b0"/><rect x="5" y="6" width="2" height="1" fill="#2d62a6"/><rect x="7" y="6" width="3" height="1" fill="#fff0b0"/><rect x="10" y="6" width="1" height="1" fill="#9a7a38"/><rect x="0" y="7" width="1" height="1" fill="#9a7a38"/><rect x="1" y="7" width="4" height="1" fill="#fff0b0"/><rect x="5" y="7" width="2" height="1" fill="#2d62a6"/><rect x="7" y="7" width="3" height="1" fill="#fff0b0"/><rect x="10" y="7" width="1" height="1" fill="#9a7a38"/><rect x="0" y="8" width="1" height="1" fill="#9a7a38"/><rect x="1" y="8" width="4" height="1" fill="#fff0b0"/><rect x="5" y="8" width="2" height="1" fill="#2d62a6"/><rect x="7" y="8" width="5" height="1" fill="#d98a08"/><rect x="0" y="9" width="1" height="1" fill="#9a7a38"/><rect x="1" y="9" width="1" height="1" fill="#fff0b0"/><rect x="2" y="9" width="1" height="1" fill="#2d62a6"/><rect x="3" y="9" width="2" height="1" fill="#fff0b0"/><rect x="5" y="9" width="2" height="1" fill="#2d62a6"/><rect x="7" y="9" width="1" height="1" fill="#d98a08"/><rect x="8" y="9" width="2" height="1" fill="#f8c030"/><rect x="10" y="9" width="1" height="1" fill="#fff0b0"/><rect x="11" y="9" width="1" height="1" fill="#d98a08"/><rect x="0" y="10" width="1" height="1" fill="#9a7a38"/><rect x="1" y="10" width="1" height="1" fill="#fff0b0"/><rect x="2" y="10" width="4" height="1" fill="#2d62a6"/><rect x="6" y="10" width="1" height="1" fill="#fff0b0"/><rect x="7" y="10" width="1" height="1" fill="#d98a08"/><rect x="8" y="10" width="2" height="1" fill="#f8c030"/><rect x="10" y="10" width="1" height="1" fill="#fff0b0"/><rect x="11" y="10" width="1" height="1" fill="#d98a08"/><rect x="0" y="11" width="1" height="1" fill="#9a7a38"/><rect x="1" y="11" width="2" height="1" fill="#fff0b0"/><rect x="3" y="11" width="2" height="1" fill="#2d62a6"/><rect x="5" y="11" width="2" height="1" fill="#fff0b0"/><rect x="7" y="11" width="1" height="1" fill="#d98a08"/><rect x="8" y="11" width="2" height="1" fill="#f8c030"/><rect x="10" y="11" width="1" height="1" fill="#fff0b0"/><rect x="11" y="11" width="1" height="1" fill="#d98a08"/><rect x="0" y="12" width="1" height="1" fill="#9a7a38"/><rect x="1" y="12" width="6" height="1" fill="#fff0b0"/><rect x="7" y="12" width="1" height="1" fill="#d98a08"/><rect x="8" y="12" width="2" height="1" fill="#f8c030"/><rect x="10" y="12" width="1" height="1" fill="#fff0b0"/><rect x="11" y="12" width="1" height="1" fill="#d98a08"/><rect x="0" y="13" width="7" height="1" fill="#9a7a38"/><rect x="7" y="13" width="1" height="1" fill="#d98a08"/><rect x="8" y="13" width="3" height="1" fill="#f8c030"/><rect x="11" y="13" width="1" height="1" fill="#d98a08"/><rect x="7" y="14" width="5" height="1" fill="#d98a08"/></svg>
<div class="t dim" style="left:138px;top:437px">&gt;</div>
<div class="t" style="left:151px;top:437px;letter-spacing:0.5px">NodeContainer.java</div>
<svg style="left:100px;top:465px" width="13" height="13"><defs><linearGradient id="ex" x1="0" y1="0" x2="0" y2="1"><stop offset="0" stop-color="#fffdf8"/><stop offset="1" stop-color="#e8dcc0"/></linearGradient></defs><rect x="0.5" y="0.5" width="12" height="12" rx="2" fill="url(#ex)" stroke="#cdbb8c"/><path d="M3 6.5H10" stroke="#111" stroke-width="1.3"/><path d="M6.5 3V10" stroke="#111" stroke-width="1.3"/></svg>
<svg style="left:121px;top:465px" width="12" height="15" shape-rendering="crispEdges"><rect x="0" y="0" width="7" height="1" fill="#9a7a38"/><rect x="7" y="0" width="1" height="1" fill="#e6c97e"/><rect x="0" y="1" width="1" height="1" fill="#9a7a38"/><rect x="1" y="1" width="5" height="1" fill="#fff0b0"/><rect x="6" y="1" width="1" height="1" fill="#9a7a38"/><rect x="7" y="1" width="2" height="1" fill="#e6c97e"/><rect x="0" y="2" width="1" height="1" fill="#9a7a38"/><rect x="1" y="2" width="5" height="1" fill="#fff0b0"/><rect x="6" y="2" width="1" height="1" fill="#9a7a38"/><rect x="7" y="2" width="3" height="1" fill="#e6c97e"/><rect x="0" y="3" width="1" height="1" fill="#9a7a38"/><rect x="1" y="3" width="4" height="1" fill="#fff0b0"/><rect x="5" y="3" width="2" height="1" fill="#2d62a6"/><rect x="7" y="3" width="4" height="1" fill="#9a7a38"/><rect x="0" y="4" width="1" height="1" fill="#9a7a38"/><rect x="1" y="4" width="4" height="1" fill="#fff0b0"/><rect x="5" y="4" width="2" height="1" fill="#2d62a6"/><rect x="7" y="4" width="3" height="1" fill="#fff0b0"/><rect x="10" y="4" width="1" height="1" fill="#9a7a38"/><rect x="0" y="5" width="1" height="1" fill="#9a7a38"/><rect x="1" y="5" width="4" height="1" fill="#fff0b0"/><rect x="5" y="5" width="2" height="1" fill="#2d62a6"/><rect x="7" y="5" width="3" height="1" fill="#fff0b0"/><rect x="10" y="5" width="1" height="1" fill="#9a7a38"/><rect x="0" y="6" width="1" height="1" fill="#9a7a38"/><rect x="1" y="6" width="4" height="1" fill="#fff0b0"/><rect x="5" y="6" width="2" height="1" fill="#2d62a6"/><rect x="7" y="6" width="3" height="1" fill="#fff0b0"/><rect x="10" y="6" width="1" height="1" fill="#9a7a38"/><rect x="0" y="7" width="1" height="1" fill="#9a7a38"/><rect x="1" y="7" width="4" height="1" fill="#fff0b0"/><rect x="5" y="7" width="2" height="1" fill="#2d62a6"/><rect x="7" y="7" width="3" height="1" fill="#fff0b0"/><rect x="10" y="7" width="1" height="1" fill="#9a7a38"/><rect x="0" y="8" width="1" height="1" fill="#9a7a38"/><rect x="1" y="8" width="4" height="1" fill="#fff0b0"/><rect x="5" y="8" width="2" height="1" fill="#2d62a6"/><rect x="7" y="8" width="5" height="1" fill="#d98a08"/><rect x="0" y="9" width="1" height="1" fill="#9a7a38"/><rect x="1" y="9" width="1" height="1" fill="#fff0b0"/><rect x="2" y="9" width="1" height="1" fill="#2d62a6"/><rect x="3" y="9" width="2" height="1" fill="#fff0b0"/><rect x="5" y="9" width="2" height="1" fill="#2d62a6"/><rect x="7" y="9" width="1" height="1" fill="#d98a08"/><rect x="8" y="9" width="2" height="1" fill="#f8c030"/><rect x="10" y="9" width="1" height="1" fill="#fff0b0"/><rect x="11" y="9" width="1" height="1" fill="#d98a08"/><rect x="0" y="10" width="1" height="1" fill="#9a7a38"/><rect x="1" y="10" width="1" height="1" fill="#fff0b0"/><rect x="2" y="10" width="4" height="1" fill="#2d62a6"/><rect x="6" y="10" width="1" height="1" fill="#fff0b0"/><rect x="7" y="10" width="1" height="1" fill="#d98a08"/><rect x="8" y="10" width="2" height="1" fill="#f8c030"/><rect x="10" y="10" width="1" height="1" fill="#fff0b0"/><rect x="11" y="10" width="1" height="1" fill="#d98a08"/><rect x="0" y="11" width="1" height="1" fill="#9a7a38"/><rect x="1" y="11" width="2" height="1" fill="#fff0b0"/><rect x="3" y="11" width="2" height="1" fill="#2d62a6"/><rect x="5" y="11" width="2" height="1" fill="#fff0b0"/><rect x="7" y="11" width="1" height="1" fill="#d98a08"/><rect x="8" y="11" width="2" height="1" fill="#f8c030"/><rect x="10" y="11" width="1" height="1" fill="#fff0b0"/><rect x="11" y="11" width="1" height="1" fill="#d98a08"/><rect x="0" y="12" width="1" height="1" fill="#9a7a38"/><rect x="1" y="12" width="6" height="1" fill="#fff0b0"/><rect x="7" y="12" width="1" height="1" fill="#d98a08"/><rect x="8" y="12" width="2" height="1" fill="#f8c030"/><rect x="10" y="12" width="1" height="1" fill="#fff0b0"/><rect x="11" y="12" width="1" height="1" fill="#d98a08"/><rect x="0" y="13" width="7" height="1" fill="#9a7a38"/><rect x="7" y="13" width="1" height="1" fill="#d98a08"/><rect x="8" y="13" width="3" height="1" fill="#f8c030"/><rect x="11" y="13" width="1" height="1" fill="#d98a08"/><rect x="7" y="14" width="5" height="1" fill="#d98a08"/></svg>
<div class="t dim" style="left:138px;top:460px">&gt;</div>
<div class="t" style="left:151px;top:460px;letter-spacing:0.5px">ZipArchiv.java</div>
<div class="t dim" style="left:248px;top:460px">59</div>
</div>
<div class="ab" style="left:301px;top:102px;width:800px;height:2px;background:#aaa69e"></div>
<div class="ab" style="left:301px;top:102px;width:2px;height:377px;background:#aaa69e"></div>
<div class="ab" style="left:1099px;top:102px;width:2px;height:377px;background:#aaa69e"></div>
<div class="ab" style="left:303px;top:104px;width:12px;height:92px;background:#f4ecda"></div>
<div class="ab" style="left:303px;top:196px;width:12px;height:283px;background-color:#fdf0d4;background-image:linear-gradient(45deg,#fbe4b8 25%,transparent 25%,transparent 75%,#fbe4b8 75%),linear-gradient(45deg,#fbe4b8 25%,transparent 25%,transparent 75%,#fbe4b8 75%);background-size:2px 2px;background-position:0 0,1px 1px"></div>
<div class="ab" style="left:315px;top:104px;width:754px;height:375px;background:#fff"></div>
<div class="ab" style="left:348px;top:104px;width:1px;height:375px;background:#efe6d2"></div>
<div class="ab" style="left:349px;top:247px;width:720px;height:17px;background:#e8f2fe"></div>
<div class="ab" style="left:901px;top:104px;width:1px;height:375px;background:#b4b4bc"></div>
<div class="ab" style="left:357px;top:248px;width:2px;height:16px;background:#000"></div>
<div class="ab" style="left:303px;top:104px;width:766px;height:375px;overflow:hidden">
<div class="ln" style="left:-4px;top:-9px">31</div>
<div class="code" style="left:46px;top:-9px">            <span class="k">for</span> (File f : hdd.get(File.<span class="k">class</span>)) {</div>
<div class="ln" style="left:-4px;top:8px">32</div>
<div class="code" style="left:46px;top:8px">                printContent(f, <span class="s">&quot;|-&quot;</span>);</div>
<div class="ln" style="left:-4px;top:25px">33</div>
<div class="code" style="left:46px;top:25px">            }</div>
<div class="ln" style="left:-4px;top:42px">34</div>
<div class="code" style="left:46px;top:42px">        }</div>
<div class="ln" style="left:-4px;top:59px">35</div>
<div class="code" style="left:46px;top:59px">    }</div>
<div class="ln" style="left:-4px;top:76px">36</div>
<div class="ln" style="left:-4px;top:93px">37</div>
<div class="code" style="left:46px;top:93px">    <span class="k">private</span> <span class="k">void</span> printContent(Node d, String ident) {</div>
<div class="ln" style="left:-4px;top:110px">38</div>
<div class="code" style="left:46px;top:110px">        System.<span class="f">out</span>.println(<span class="s">&quot;|-&quot;</span> + ident + <span class="s">&quot; &quot;</span> + d.getName());</div>
<div class="ln" style="left:-4px;top:127px">39</div>
<div class="ln" style="left:-4px;top:144px">40</div>
<div class="code" style="left:46px;top:144px">        ArrayList&lt;Class&lt;? <span class="k">extends</span> Node&gt;&gt; list = <span class="k">new</span> ArrayList&lt;Class&lt;? <span class="k">extends</span> Node&gt;&gt;();</div>
<div class="ln" style="left:-4px;top:161px">41</div>
<div class="code" style="left:46px;top:161px">        list.add(Directory.<span class="k">class</span>);</div>
<div class="ln" style="left:-4px;top:178px">42</div>
<div class="code" style="left:46px;top:178px">        list.add(ZipArchiv.<span class="k">class</span>);</div>
<div class="ln" style="left:-4px;top:195px">43</div>
<div class="code" style="left:46px;top:195px">        list.add(File.<span class="k">class</span>);</div>
<div class="ln" style="left:-4px;top:212px">44</div>
<div class="ln" style="left:-4px;top:229px">45</div>
<div class="code" style="left:46px;top:229px">        <span class="k">if</span> (d <span class="k">instanceof</span> NodeContainer) {</div>
<div class="ln" style="left:-4px;top:246px">46</div>
<div class="code" style="left:46px;top:246px">            NodeContainer e = (NodeContainer) d;</div>
<div class="ln" style="left:-4px;top:263px">47</div>
<div class="code" style="left:46px;top:263px">            <span class="k">for</span> (Class&lt;? <span class="k">extends</span> Node&gt; T : list) {</div>
<div class="ln" style="left:-4px;top:280px">48</div>
<div class="code" style="left:46px;top:280px">                ArrayList&lt;? <span class="k">extends</span> Node&gt; tmp = e.get(T);</div>
<div class="ln" style="left:-4px;top:297px">49</div>
<div class="code" style="left:46px;top:297px">                <span class="k">for</span> (Node n : tmp) {</div>
<div class="ln" style="left:-4px;top:314px">50</div>
<div class="code" style="left:46px;top:314px">                    printContent(n, ident + <span class="s">&quot;-&quot;</span>);</div>
<div class="ln" style="left:-4px;top:331px">51</div>
<div class="code" style="left:46px;top:331px">                }</div>
<div class="ln" style="left:-4px;top:348px">52</div>
<div class="code" style="left:46px;top:348px">            }</div>
<div class="ln" style="left:-4px;top:365px">53</div>
<div class="code" style="left:46px;top:365px">        }</div>
</div>
<svg style="left:339px;top:199px" width="10" height="10"><circle cx="4.5" cy="4.5" r="4" fill="#dde4ee" stroke="#a8b4c8"/><path d="M2.2 4.5H6.8" stroke="#5a6a8a" stroke-width="1.1"/></svg>
<div class="ab" style="left:1069px;top:104px;width:17px;height:375px;background:#f4ecda"></div>
<div class="ab" style="left:1071px;top:104px;width:15px;height:385px;border:1px solid #dccca0;border-radius:3px;background:linear-gradient(90deg,#f1e8d4,#fdfbf6 60%,#f6f0e2)"></div>
<svg style="left:1075px;top:109px" width="9" height="6"><path d="M1 4.8L4.5 1.3L8 4.8" fill="none" stroke="#4a463e" stroke-width="1.5"/></svg>
<div class="ab" style="left:1071px;top:257px;width:15px;height:145px;border:1px solid #c89a3a;background:linear-gradient(90deg,#f8d070,#f0bf50)"></div>
<svg style="left:1071px;top:257px" width="15" height="145"><circle cx="7.5" cy="7" r="1.9" fill="#e6b448"/><circle cx="7.5" cy="16" r="1.9" fill="#e6b448"/><circle cx="7.5" cy="25" r="1.9" fill="#e6b448"/><circle cx="7.5" cy="34" r="1.9" fill="#e6b448"/><circle cx="7.5" cy="43" r="1.9" fill="#e6b448"/><circle cx="7.5" cy="52" r="1.9" fill="#e6b448"/><circle cx="7.5" cy="61" r="1.9" fill="#e6b448"/><circle cx="7.5" cy="70" r="1.9" fill="#e6b448"/><circle cx="7.5" cy="79" r="1.9" fill="#e6b448"/><circle cx="7.5" cy="88" r="1.9" fill="#e6b448"/><circle cx="7.5" cy="97" r="1.9" fill="#e6b448"/><circle cx="7.5" cy="106" r="1.9" fill="#e6b448"/><circle cx="7.5" cy="115" r="1.9" fill="#e6b448"/><circle cx="7.5" cy="124" r="1.9" fill="#e6b448"/><circle cx="7.5" cy="133" r="1.9" fill="#e6b448"/></svg>
<div class="ab" style="left:1086px;top:104px;width:13px;height:375px;background:#f4ecda"></div>
<svg style="left:1193px;top:112px" width="18" height="17"><path d="M3.5 2V14" stroke="#555" stroke-width="1"/><path d="M1 11.5L3.5 14.5L6 11.5" fill="none" stroke="#555" stroke-width="1"/><text x="6" y="7.6" font-size="10" font-weight="bold" fill="#2a9080" font-family="Liberation Serif">a</text><text x="10.5" y="15.8" font-size="10" font-weight="bold" fill="#9a3aa0" font-family="Liberation Serif">z</text></svg>
<svg style="left:1222px;top:112px" width="17" height="16"><circle cx="8" cy="7.5" r="5.3" fill="#78c0f0" stroke="#3a98d8" stroke-width="1.2"/><circle cx="7" cy="6.5" r="2.5" fill="#d8f0ff"/><path d="M1 1L15.5 15.5" stroke="#1a3a9a" stroke-width="1.2"/></svg>
<svg style="left:1251px;top:111px" width="16" height="17"><circle cx="6" cy="10" r="4" fill="#a8a8a8" stroke="#808080" stroke-width="0.8"/><path d="M0.5 5L12 16" stroke="#1a3a9a" stroke-width="1.2"/><text x="9.5" y="7.6" font-size="8.5" fill="#2a5aa8" font-family="Liberation Sans" font-weight="bold">S</text></svg>
<svg style="left:1281px;top:115px" width="10" height="10"><circle cx="5" cy="5" r="4" fill="#58b060" stroke="#3a9040" stroke-width="0.8"/><circle cx="4.3" cy="4" r="1.8" fill="#90d090"/></svg>
<svg style="left:1307px;top:111px" width="16" height="17"><circle cx="6" cy="10" r="4" fill="#a8a8a8" stroke="#808080" stroke-width="0.8"/><path d="M0.5 5L12 16" stroke="#1a3a9a" stroke-width="1.2"/><text x="9.5" y="7.6" font-size="8.5" fill="#2a5aa8" font-family="Liberation Sans" font-weight="bold">L</text></svg>
<svg style="left:1340px;top:113px" width="11" height="7"><path d="M0.6 0.6H10.4L5.5 5Z" fill="#fff" stroke="#000" stroke-width="1.2" stroke-linejoin="miter"/></svg>
<div class="ab" style="left:1108px;top:137px;width:250px;height:1px;background:#c9b37e"></div>
<div class="ab" style="left:1108px;top:138px;width:250px;height:341px;background:#fff"></div>
<div class="ab" style="left:1108px;top:276px;width:250px;height:23px;background:linear-gradient(#f3e9d2,#eadcb6 55%,#dbc792)"></div>
<div class="ab" style="left:1108px;top:276px;width:250px;height:1px;background:#e8dcc0"></div>
<div class="ab" style="left:0;top:0;width:1358px;height:479px;overflow:hidden">
<svg style="left:1110px;top:143px" width="13" height="13"><defs><linearGradient id="ex" x1="0" y1="0" x2="0" y2="1"><stop offset="0" stop-color="#fffdf8"/><stop offset="1" stop-color="#e8dcc0"/></linearGradient></defs><rect x="0.5" y="0.5" width="12" height="12" rx="2" fill="url(#ex)" stroke="#cdbb8c"/><path d="M3 6.5H10" stroke="#111" stroke-width="1.3"/><path d="M6.5 3V10" stroke="#111" stroke-width="1.3"/></svg>
<svg style="left:1130px;top:143px" width="13" height="13" shape-rendering="crispEdges"><rect x="3" y="0" width="1" height="1" fill="#2a4a90"/><rect x="2" y="1" width="2" height="1" fill="#2a4a90"/><rect x="1" y="2" width="3" height="1" fill="#2a4a90"/><rect x="5" y="4" width="8" height="1" fill="#7a90c4"/><rect x="4" y="6" width="9" height="1" fill="#7a90c4"/><rect x="5" y="8" width="8" height="1" fill="#7a90c4"/><rect x="4" y="10" width="9" height="1" fill="#7a90c4"/><rect x="5" y="12" width="8" height="1" fill="#7a90c4"/></svg>
<div class="t" style="left:1153px;top:138px;letter-spacing:0.5px">import declarations<span class="dim"></span></div>
<svg style="left:1133px;top:170px" width="7" height="7"><circle cx="3.5" cy="3.5" r="2.5" fill="#fff" stroke="#2a8a3a" stroke-width="1.4"/></svg>
<div class="t" style="left:1153px;top:161px;letter-spacing:0.36px">computerName<span class="dim"> : String</span></div>
<svg style="left:1133px;top:193px" width="7" height="7"><circle cx="3.5" cy="3.5" r="2.5" fill="#fff" stroke="#2a8a3a" stroke-width="1.4"/></svg>
<div class="t" style="left:1153px;top:184px;letter-spacing:0.41px">hdds<span class="dim"> : Vector&lt;HDD&gt;</span></div>
<svg style="left:1132px;top:216px" width="9" height="9"><circle cx="4.5" cy="4.5" r="3.8" fill="#5ab060" stroke="#2a7a34" stroke-width="1"/><circle cx="3.6" cy="3.5" r="1.5" fill="#9ad09a"/></svg>
<div class="t" style="left:1153px;top:207px;letter-spacing:0.22px">Computer(String, HDD)<span class="dim"></span></div>
<svg style="left:1133px;top:240px" width="7" height="7"><rect x="0.5" y="0.5" width="6" height="6" fill="#f07080" stroke="#c02a3a" stroke-width="1"/></svg>
<div class="t" style="left:1153px;top:230px;letter-spacing:0.35px">addDrive(HDD)<span class="dim"> : void</span></div>
<svg style="left:1132px;top:262px" width="9" height="9"><circle cx="4.5" cy="4.5" r="3.8" fill="#5ab060" stroke="#2a7a34" stroke-width="1"/><circle cx="3.6" cy="3.5" r="1.5" fill="#9ad09a"/></svg>
<div class="t" style="left:1153px;top:253px;letter-spacing:0.41px">printContent()<span class="dim"> : void</span></div>
<svg style="left:1133px;top:286px" width="7" height="7"><rect x="0.5" y="0.5" width="6" height="6" fill="#f07080" stroke="#c02a3a" stroke-width="1"/></svg>
<div class="t" style="left:1153px;top:276px;letter-spacing:0.34px">printContent(Node, String) : void<span class="dim"></span></div>
<svg style="left:1132px;top:308px" width="9" height="9"><circle cx="4.5" cy="4.5" r="3.8" fill="#5ab060" stroke="#2a7a34" stroke-width="1"/><circle cx="3.6" cy="3.5" r="1.5" fill="#9ad09a"/></svg>
<div class="t" style="left:1153px;top:299px;letter-spacing:0.46px">main(String[])<span class="dim"> : void</span></div>
<svg style="left:1144px;top:211px" width="5" height="6" shape-rendering="crispEdges"><rect x="1" y="0" width="4" height="1" fill="#1f8a3c"/><rect x="0" y="1" width="2" height="1" fill="#1f8a3c"/><rect x="4" y="1" width="1" height="1" fill="#1f8a3c"/><rect x="0" y="2" width="2" height="1" fill="#1f8a3c"/><rect x="0" y="3" width="2" height="1" fill="#1f8a3c"/><rect x="0" y="4" width="2" height="1" fill="#1f8a3c"/><rect x="4" y="4" width="1" height="1" fill="#1f8a3c"/><rect x="1" y="5" width="4" height="1" fill="#1f8a3c"/></svg>
<svg style="left:1145px;top:303px" width="5" height="7" shape-rendering="crispEdges"><rect x="1" y="0" width="3" height="1" fill="#d0183e"/><rect x="0" y="1" width="1" height="1" fill="#d0183e"/><rect x="4" y="1" width="1" height="1" fill="#d0183e"/><rect x="0" y="2" width="1" height="1" fill="#d0183e"/><rect x="1" y="3" width="3" height="1" fill="#d0183e"/><rect x="4" y="4" width="1" height="1" fill="#d0183e"/><rect x="0" y="5" width="1" height="1" fill="#d0183e"/><rect x="4" y="5" width="1" height="1" fill="#d0183e"/><rect x="1" y="6" width="3" height="1" fill="#d0183e"/></svg>
</div>
</body></html>
